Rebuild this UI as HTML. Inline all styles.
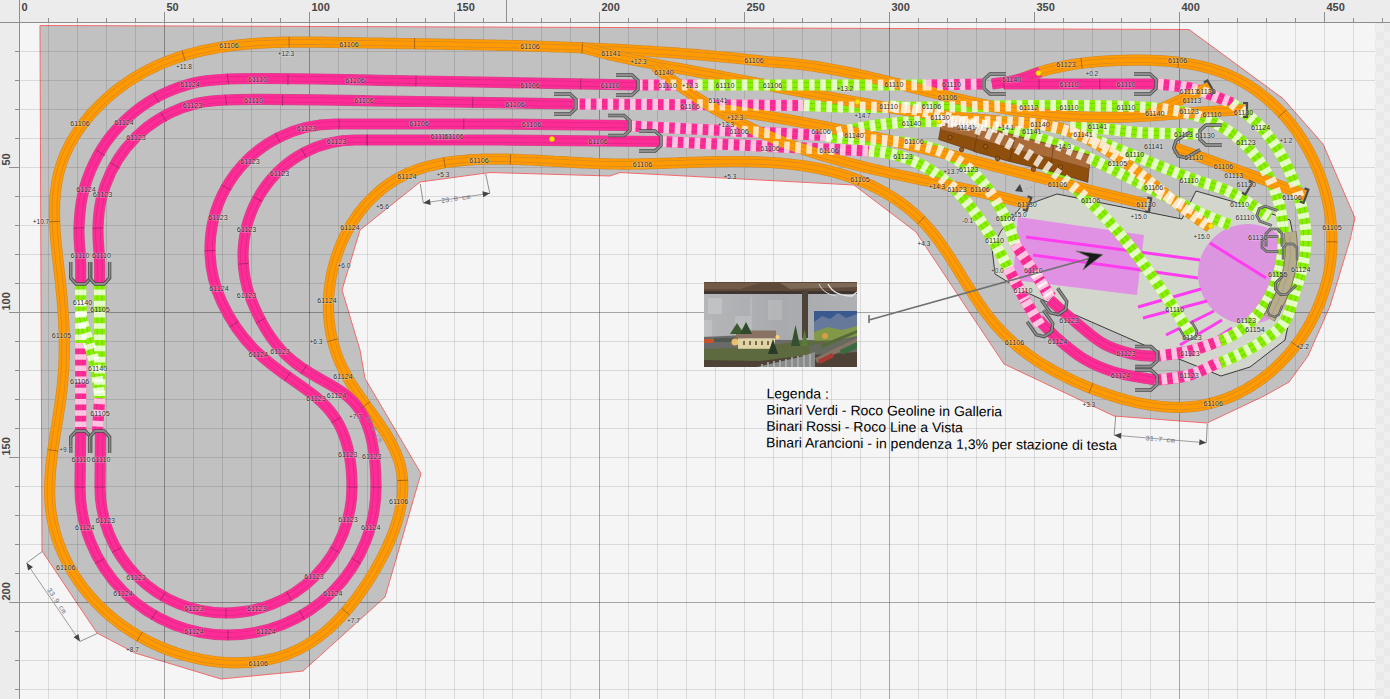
<!DOCTYPE html><html><head><meta charset="utf-8"><style>html,body{margin:0;padding:0;background:#f5f5f5;overflow:hidden}svg{display:block;font-family:"Liberation Sans",sans-serif}</style></head><body>
<svg width="1390" height="699" viewBox="0 0 1390 699">
<defs>
<pattern id="chk" width="16" height="16" patternUnits="userSpaceOnUse" x="0" y="0"><rect width="16" height="16" fill="#efefef"/><rect width="8" height="8" fill="#e9e9e9"/><rect x="8" y="8" width="8" height="8" fill="#e9e9e9"/></pattern>
</defs>
<rect width="1390" height="699" fill="#f5f5f5"/>
<rect x="1375" y="23" width="15" height="676" fill="url(#chk)"/>
<path d="M40 25.5 L1189 29.5 L1283 98.6 L1323 144 L1355 218 L1350 240 L1330 306 L1308 356 L1289 382 L1264 396 L1207 423 L1114 416 L1004 364 L952 286 L916 232 L854 185 L620 172.5 L610 176 L490 172.5 L420 182 L360 230 L342 290 L360 350 L365 378.5 L421 473.5 L385 597 L303 671 L221 679 L135 653 L97 633 L42 551 Z" fill="#c1c1c1" stroke="#f26b6b" stroke-width="1"/>
<line x1="19.5" y1="23" x2="19.5" y2="699" stroke="rgba(0,0,0,0.32)"/><line x1="48.5" y1="23" x2="48.5" y2="699" stroke="rgba(0,0,0,0.11)"/><line x1="77.5" y1="23" x2="77.5" y2="699" stroke="rgba(0,0,0,0.11)"/><line x1="106.5" y1="23" x2="106.5" y2="699" stroke="rgba(0,0,0,0.11)"/><line x1="135.5" y1="23" x2="135.5" y2="699" stroke="rgba(0,0,0,0.11)"/><line x1="164.5" y1="23" x2="164.5" y2="699" stroke="rgba(0,0,0,0.32)"/><line x1="193.5" y1="23" x2="193.5" y2="699" stroke="rgba(0,0,0,0.11)"/><line x1="222.5" y1="23" x2="222.5" y2="699" stroke="rgba(0,0,0,0.11)"/><line x1="251.5" y1="23" x2="251.5" y2="699" stroke="rgba(0,0,0,0.11)"/><line x1="280.5" y1="23" x2="280.5" y2="699" stroke="rgba(0,0,0,0.11)"/><line x1="309.5" y1="23" x2="309.5" y2="699" stroke="rgba(0,0,0,0.32)"/><line x1="338.5" y1="23" x2="338.5" y2="699" stroke="rgba(0,0,0,0.11)"/><line x1="367.5" y1="23" x2="367.5" y2="699" stroke="rgba(0,0,0,0.11)"/><line x1="396.5" y1="23" x2="396.5" y2="699" stroke="rgba(0,0,0,0.11)"/><line x1="425.5" y1="23" x2="425.5" y2="699" stroke="rgba(0,0,0,0.11)"/><line x1="454.5" y1="23" x2="454.5" y2="699" stroke="rgba(0,0,0,0.11)"/><line x1="483.5" y1="23" x2="483.5" y2="699" stroke="rgba(0,0,0,0.11)"/><line x1="512.5" y1="23" x2="512.5" y2="699" stroke="rgba(0,0,0,0.11)"/><line x1="541.5" y1="23" x2="541.5" y2="699" stroke="rgba(0,0,0,0.11)"/><line x1="570.5" y1="23" x2="570.5" y2="699" stroke="rgba(0,0,0,0.11)"/><line x1="599.5" y1="23" x2="599.5" y2="699" stroke="rgba(0,0,0,0.32)"/><line x1="628.5" y1="23" x2="628.5" y2="699" stroke="rgba(0,0,0,0.11)"/><line x1="657.5" y1="23" x2="657.5" y2="699" stroke="rgba(0,0,0,0.11)"/><line x1="686.5" y1="23" x2="686.5" y2="699" stroke="rgba(0,0,0,0.11)"/><line x1="715.5" y1="23" x2="715.5" y2="699" stroke="rgba(0,0,0,0.11)"/><line x1="744.5" y1="23" x2="744.5" y2="699" stroke="rgba(0,0,0,0.11)"/><line x1="773.5" y1="23" x2="773.5" y2="699" stroke="rgba(0,0,0,0.11)"/><line x1="802.5" y1="23" x2="802.5" y2="699" stroke="rgba(0,0,0,0.11)"/><line x1="831.5" y1="23" x2="831.5" y2="699" stroke="rgba(0,0,0,0.11)"/><line x1="860.5" y1="23" x2="860.5" y2="699" stroke="rgba(0,0,0,0.11)"/><line x1="889.5" y1="23" x2="889.5" y2="699" stroke="rgba(0,0,0,0.32)"/><line x1="918.5" y1="23" x2="918.5" y2="699" stroke="rgba(0,0,0,0.11)"/><line x1="947.5" y1="23" x2="947.5" y2="699" stroke="rgba(0,0,0,0.11)"/><line x1="976.5" y1="23" x2="976.5" y2="699" stroke="rgba(0,0,0,0.11)"/><line x1="1005.5" y1="23" x2="1005.5" y2="699" stroke="rgba(0,0,0,0.11)"/><line x1="1034.5" y1="23" x2="1034.5" y2="699" stroke="rgba(0,0,0,0.11)"/><line x1="1063.5" y1="23" x2="1063.5" y2="699" stroke="rgba(0,0,0,0.11)"/><line x1="1092.5" y1="23" x2="1092.5" y2="699" stroke="rgba(0,0,0,0.11)"/><line x1="1121.5" y1="23" x2="1121.5" y2="699" stroke="rgba(0,0,0,0.11)"/><line x1="1150.5" y1="23" x2="1150.5" y2="699" stroke="rgba(0,0,0,0.11)"/><line x1="1179.5" y1="23" x2="1179.5" y2="699" stroke="rgba(0,0,0,0.32)"/><line x1="1208.5" y1="23" x2="1208.5" y2="699" stroke="rgba(0,0,0,0.11)"/><line x1="1237.5" y1="23" x2="1237.5" y2="699" stroke="rgba(0,0,0,0.11)"/><line x1="1266.5" y1="23" x2="1266.5" y2="699" stroke="rgba(0,0,0,0.11)"/><line x1="1295.5" y1="23" x2="1295.5" y2="699" stroke="rgba(0,0,0,0.11)"/><line x1="1324.5" y1="23" x2="1324.5" y2="699" stroke="rgba(0,0,0,0.11)"/><line x1="1353.5" y1="23" x2="1353.5" y2="699" stroke="rgba(0,0,0,0.11)"/><line x1="19" y1="51.5" x2="1375" y2="51.5" stroke="rgba(0,0,0,0.11)"/><line x1="19" y1="80.5" x2="1375" y2="80.5" stroke="rgba(0,0,0,0.11)"/><line x1="19" y1="109.5" x2="1375" y2="109.5" stroke="rgba(0,0,0,0.11)"/><line x1="19" y1="138.5" x2="1375" y2="138.5" stroke="rgba(0,0,0,0.11)"/><line x1="19" y1="167.5" x2="1375" y2="167.5" stroke="rgba(0,0,0,0.11)"/><line x1="19" y1="196.5" x2="1375" y2="196.5" stroke="rgba(0,0,0,0.11)"/><line x1="19" y1="225.5" x2="1375" y2="225.5" stroke="rgba(0,0,0,0.11)"/><line x1="19" y1="254.5" x2="1375" y2="254.5" stroke="rgba(0,0,0,0.11)"/><line x1="19" y1="283.5" x2="1375" y2="283.5" stroke="rgba(0,0,0,0.11)"/><line x1="19" y1="312.5" x2="1375" y2="312.5" stroke="rgba(0,0,0,0.32)"/><line x1="19" y1="341.5" x2="1375" y2="341.5" stroke="rgba(0,0,0,0.11)"/><line x1="19" y1="370.5" x2="1375" y2="370.5" stroke="rgba(0,0,0,0.11)"/><line x1="19" y1="399.5" x2="1375" y2="399.5" stroke="rgba(0,0,0,0.11)"/><line x1="19" y1="428.5" x2="1375" y2="428.5" stroke="rgba(0,0,0,0.11)"/><line x1="19" y1="457.5" x2="1375" y2="457.5" stroke="rgba(0,0,0,0.11)"/><line x1="19" y1="486.5" x2="1375" y2="486.5" stroke="rgba(0,0,0,0.11)"/><line x1="19" y1="515.5" x2="1375" y2="515.5" stroke="rgba(0,0,0,0.11)"/><line x1="19" y1="544.5" x2="1375" y2="544.5" stroke="rgba(0,0,0,0.11)"/><line x1="19" y1="573.5" x2="1375" y2="573.5" stroke="rgba(0,0,0,0.11)"/><line x1="19" y1="602.5" x2="1375" y2="602.5" stroke="rgba(0,0,0,0.32)"/><line x1="19" y1="631.5" x2="1375" y2="631.5" stroke="rgba(0,0,0,0.11)"/><line x1="19" y1="660.5" x2="1375" y2="660.5" stroke="rgba(0,0,0,0.11)"/><line x1="19" y1="689.5" x2="1375" y2="689.5" stroke="rgba(0,0,0,0.11)"/><line x1="19" y1="718.5" x2="1375" y2="718.5" stroke="rgba(0,0,0,0.11)"/>
<path d="M992 248 L1001 231 L1021 207 L1057 194 L1182 219 L1196 191 L1245 205 L1290 220 L1300 270 L1285 340 L1250 367 L1221 376 L1184 361 L1160 352 L1071 313 L1030 294 L1008 282 L995 274 Z" fill="#d2d6cd" stroke="#3a3a3a" stroke-width="1"/><path d="M1018 217 L1144 235 L1137 295 L1013 280 Z" fill="#e28be6" opacity="0.92"/><circle cx="1248" cy="274" r="50" fill="#dc95df"/><line x1="1026" y1="237" x2="1200" y2="260" stroke="#ff3cf0" stroke-width="3"/><line x1="1033" y1="255" x2="1198" y2="278" stroke="#ff3cf0" stroke-width="3"/><line x1="1210" y1="243" x2="1266" y2="278" stroke="#ff3cf0" stroke-width="3"/><line x1="1138" y1="307" x2="1201" y2="289" stroke="#ff3cf0" stroke-width="3"/><line x1="1143" y1="318" x2="1207" y2="301" stroke="#ff3cf0" stroke-width="3"/><line x1="1166" y1="335" x2="1214" y2="311" stroke="#ff3cf0" stroke-width="3"/><line x1="1180" y1="345" x2="1222" y2="320" stroke="#ff3cf0" stroke-width="3"/><line x1="1195" y1="352" x2="1232" y2="328" stroke="#ff3cf0" stroke-width="3"/>
<defs><path id="t0" d="M1010 84 1013.6 82.2 1017.2 80.5 1020.9 78.9 1024.5 77.4 1028.2 76 1031.9 74.6 1035.6 73.3 1039.4 72.1 1043.1 71 1046.9 69.9 1050.7 68.9 1054.5 68 1058.3 67.2 1062.1 66.4 1066 65.6 1069.9 65 1073.8 64.3 1077.7 63.8 1081.6 63.3 1085.5 62.8 1089.5 62.4 1093.4 62 1097.4 61.7 1101.4 61.4 1105.4 61.1 1109.4 60.9 1113.4 60.7 1117.5 60.5 1121.5 60.4 1125.6 60.3 1129.7 60.2 1133.8 60.2 1137.8 60.2 1141.9 60.2 1146 60.2 1150.1 60.3 1154.2 60.5 1158.3 60.7 1162.4 60.9 1166.5 61.2 1170.5 61.5 1174.6 61.9 1178.6 62.4 1182.6 62.9 1186.6 63.5 1190.5 64.1 1194.5 64.8 1198.4 65.6 1202.3 66.5 1206.2 67.5 1210 68.5 1213.8 69.6 1217.5 70.8 1221.2 72.1 1224.9 73.5 1228.5 75 1232.1 76.5 1235.6 78.2 1239.1 80 1242.5 81.9 1245.9 83.8 1249.3 85.9 1252.5 88 1255.8 90.2 1258.9 92.5 1262.1 94.9 1265.1 97.3 1268.1 99.9 1271.1 102.5 1274 105.2 1276.8 107.9 1279.6 110.7 1282.3 113.6 1285 116.6 1287.5 119.6 1290.1 122.7 1292.5 125.8 1294.9 129 1297.3 132.3 1299.5 135.6 1301.7 138.9 1303.8 142.3 1305.9 145.8 1307.9 149.3 1309.8 152.8 1311.6 156.4 1313.4 160 1315.1 163.7 1316.7 167.4 1318.2 171.1 1319.7 174.9 1321.1 178.7 1322.4 182.5 1323.6 186.3 1324.8 190.2 1325.8 194.1 1326.8 198 1327.7 201.9 1328.5 205.9 1329.3 209.8 1329.9 213.8 1330.5 217.8 1330.9 221.8 1331.3 225.8 1331.6 229.8 1331.8 233.8 1331.9 237.8 1331.9 241.8 1331.8 245.8 1331.7 249.8 1331.4 253.7 1331 257.7 1330.6 261.7 1330 265.6 1329.3 269.6 1328.6 273.5 1327.8 277.4 1326.8 281.3 1325.8 285.1 1324.7 288.9 1323.5 292.7 1322.2 296.5 1320.8 300.3 1319.4 304 1317.8 307.6 1316.2 311.3 1314.5 314.9 1312.7 318.4 1310.9 322 1308.9 325.4 1306.9 328.9 1304.8 332.3 1302.7 335.6 1300.4 338.9 1298.1 342.1 1295.8 345.3 1293.3 348.4 1290.8 351.5 1288.3 354.5 1285.6 357.4 1282.9 360.3 1280.2 363.1 1277.4 365.8 1274.5 368.5 1271.6 371.1 1268.6 373.6 1265.5 376.1 1262.4 378.4 1259.3 380.7 1256.1 382.9 1252.8 385.1 1249.5 387.1 1246.2 389.1 1242.8 390.9 1239.4 392.7 1235.9 394.4 1232.4 396 1228.8 397.5 1225.2 398.9 1221.5 400.2 1217.9 401.3 1214.1 402.4 1210.4 403.4 1206.6 404.3 1202.8 405 1198.9 405.7 1195.1 406.2 1191.2 406.7 1187.2 407 1183.3 407.2 1179.3 407.3 1175.3 407.3 1171.3 407.1 1167.2 406.9 1163.2 406.6 1159.1 406.2 1155.1 405.7 1151 405.2 1146.9 404.5 1142.9 403.8 1138.8 403 1134.7 402.1 1130.7 401.1 1126.6 400.1 1122.6 399 1118.6 397.8 1114.6 396.6 1110.6 395.3 1106.6 394 1102.7 392.6 1098.7 391.2 1094.8 389.7 1091 388.2 1087.1 386.7 1083.3 385.1 1079.6 383.4 1075.8 381.8 1072.1 380.1 1068.5 378.4 1064.9 376.6 1061.3 374.8 1057.8 373 1054.3 371.1 1050.8 369.2 1047.4 367.2 1044 365.2 1040.7 363.1 1037.4 361 1034.2 358.8 1031 356.6 1027.8 354.4 1024.7 352 1021.7 349.7 1018.6 347.3 1015.7 344.8 1012.7 342.2 1009.9 339.6 1007 337 1004.3 334.3 1001.5 331.5 998.9 328.6 996.2 325.7 993.7 322.8 991.1 319.7 988.7 316.6 986.2 313.4 983.9 310.2 981.5 306.9 979.2 303.6 976.9 300.2 974.7 296.8 972.5 293.3 970.3 289.9 968.1 286.4 965.9 282.9 963.7 279.3 961.5 275.8 959.4 272.3 957.2 268.8 955 265.3 952.8 261.8 950.6 258.3 948.4 254.8 946.1 251.4 943.8 248.1 941.5 244.7 939.1 241.4 936.7 238.2 934.3 235 931.8 231.9 929.2 228.9 926.6 225.9 924 223 921.2 220.2 918.4 217.4 915.6 214.8 912.7 212.2 909.7 209.7 906.7 207.2 903.6 204.9 900.5 202.6 897.3 200.4 894.1 198.2 890.9 196.2 887.6 194.2 884.2 192.2 880.8 190.4 877.4 188.6 874 186.8 870.5 185.2 866.9 183.6 863.3 182 859.7 180.6 856.1 179.2 852.5 177.8 848.8 176.6 845.1 175.4 841.3 174.2 837.6 173.1 833.8 172.1 830 171.1 826.2 170.2 822.3 169.3 818.5 168.5 814.6 167.7 810.7 167 806.8 166.4 802.9 165.8 799 165.2 795.1 164.7 791.1 164.3 787.2 163.8 783.2 163.5 779.2 163.1 775.2 162.8 771.2 162.5 767.2 162.3 763.2 162.1 759.1 161.9 755.1 161.8 751 161.7 747 161.6 742.9 161.6 738.9 161.5 734.8 161.5 730.7 161.5 726.6 161.6 722.6 161.6 718.5 161.7 714.4 161.7 710.3 161.8 706.2 161.9 702.1 162.1 698 162.2 694 162.3 689.9 162.4 685.8 162.6 681.7 162.7 677.6 162.9 673.5 163 669.5 163.1 665.4 163.3 661.3 163.4 657.3 163.5 653.2 163.6 649.2 163.7 645.1 163.8 641.1 163.9 637.1 164 633.1 164 629.1 164.1 625.1 164.1 621.1 164.1 617.1 164 613.2 164 609.2 163.9 605.3 163.8 601.3 163.7 597.4 163.5 593.5 163.4 589.6 163.2 585.7 163 581.8 162.8 577.9 162.6 574 162.4 570 162.2 566.1 161.9 562.2 161.7 558.3 161.5 554.4 161.3 550.4 161 546.5 160.8 542.5 160.6 538.6 160.4 534.6 160.2 530.6 160 526.6 159.8 522.6 159.7 518.5 159.5 514.5 159.4 510.4 159.3 506.3 159.2 502.2 159.1 498 159.1 493.9 159.1 489.7 159.1 485.6 159.2 481.4 159.3 477.3 159.5 473.1 159.7 469 159.9 464.9 160.3 460.7 160.6 456.6 161.1 452.6 161.6 448.5 162.1 444.5 162.8 440.5 163.5 436.6 164.3 432.6 165.2 428.8 166.2 424.9 167.2 421.1 168.4 417.4 169.6 413.7 170.9 410.1 172.4 406.6 173.9 403.1 175.6 399.6 177.4 396.3 179.2 393 181.2 389.8 183.3 386.6 185.5 383.6 187.8 380.5 190.2 377.6 192.7 374.8 195.3 372 197.9 369.3 200.7 366.7 203.5 364.1 206.4 361.7 209.4 359.3 212.4 357 215.6 354.8 218.8 352.6 222 350.6 225.4 348.6 228.8 346.7 232.2 344.9 235.7 343.2 239.2 341.6 242.8 340.1 246.5 338.6 250.2 337.3 253.9 336 257.7 334.9 261.5 333.8 265.3 332.8 269.1 331.9 273 331.1 276.9 330.5 280.9 329.9 284.8 329.4 288.8 329 292.7 328.7 296.7 328.5 300.7 328.4 304.7 328.5 308.7 328.6 312.7 328.8 316.7 329.2 320.6 329.6 324.6 330.2 328.6 330.8 332.5 331.6 336.4 332.5 340.3 333.5 344.2 334.6 348 335.8 351.8 337.1 355.6 338.6 359.4 340.2 363.1 341.9 366.7 343.7 370.4 345.6 374 347.6 377.5 349.6 381 351.8 384.5 354 387.9 356.3 391.4 358.7 394.8 361 398.1 363.4 401.5 365.8 404.9 368.2 408.2 370.6 411.5 373 414.8 375.4 418.2 377.7 421.5 380 424.8 382.2 428.1 384.4 431.4 386.5 434.8 388.5 438.1 390.4 441.5 392.2 444.9 393.9 448.3 395.5 451.8 396.9 455.2 398.2 458.7 399.4 462.2 400.3 465.8 401.1 469.4 401.8 473 402.2 476.7 402.6 480.4 402.7 484.1 402.7 487.9 402.6 491.7 402.3 495.5 401.9 499.3 401.3 503.1 400.7 506.9 399.9 510.8 398.9 514.6 397.9 518.5 396.8 522.3 395.5 526.2 394.2 530.1 392.8 533.9 391.2 537.7 389.6 541.6 387.9 545.4 386.2 549.2 384.3 553 382.4 556.7 380.5 560.4 378.4 564.1 376.4 567.8 374.2 571.5 372.1 575.1 369.9 578.6 367.6 582.2 365.3 585.6 363 589.1 360.6 592.5 358.2 595.8 355.8 599.1 353.3 602.3 350.8 605.5 348.2 608.6 345.6 611.7 342.9 614.7 340.2 617.6 337.5 620.4 334.7 623.2 331.9 625.9 329 628.5 326.1 631.1 323.1 633.5 320 635.9 317 638.2 313.8 640.4 310.6 642.5 307.4 644.5 304.1 646.4 300.8 648.2 297.4 649.9 293.9 651.5 290.4 653 286.8 654.4 283.2 655.6 279.5 656.8 275.8 657.8 272 658.8 268.2 659.6 264.4 660.4 260.5 661 256.6 661.6 252.7 662 248.7 662.3 244.7 662.6 240.7 662.7 236.7 662.8 232.7 662.8 228.6 662.6 224.6 662.4 220.5 662.1 216.4 661.7 212.4 661.2 208.3 660.6 204.3 659.9 200.3 659.2 196.3 658.3 192.3 657.4 188.3 656.4 184.3 655.3 180.4 654.2 176.5 653 172.6 651.6 168.8 650.3 165 648.8 161.3 647.3 157.6 645.6 153.9 644 150.3 642.2 146.7 640.4 143.1 638.5 139.6 636.6 136.2 634.5 132.7 632.4 129.4 630.3 126.1 628.1 122.8 625.8 119.6 623.5 116.5 621.1 113.4 618.6 110.3 616.1 107.3 613.5 104.4 610.9 101.6 608.2 98.8 605.4 96 602.6 93.4 599.8 90.7 596.9 88.2 593.9 85.7 590.9 83.3 587.9 81 584.8 78.8 581.7 76.6 578.5 74.5 575.2 72.4 572 70.5 568.6 68.6 565.3 66.8 561.9 65.1 558.4 63.5 555 61.9 551.4 60.5 547.9 59.1 544.3 57.8 540.7 56.6 537 55.5 533.3 54.5 529.6 53.6 525.9 52.7 522.1 52 518.3 51.4 514.4 50.8 510.6 50.4 506.7 50.1 502.8 49.8 498.8 49.7 494.9 49.6 490.9 49.7 486.9 49.8 482.9 50 478.9 50.2 474.8 50.5 470.8 50.9 466.7 51.3 462.6 51.8 458.5 52.3 454.4 52.9 450.3 53.5 446.2 54.1 442.1 54.7 438 55.3 433.8 56 429.7 56.7 425.6 57.3 421.5 58 417.4 58.6 413.2 59.3 409.1 59.9 405.1 60.4 401 61 396.9 61.5 392.8 62 388.8 62.4 384.8 62.8 380.7 63.1 376.7 63.4 372.7 63.7 368.8 63.9 364.8 64 360.8 64.2 356.9 64.2 352.9 64.3 349 64.3 345 64.3 341.1 64.2 337.2 64.1 333.3 64 329.3 63.8 325.4 63.7 321.5 63.4 317.5 63.2 313.6 62.9 309.7 62.6 305.7 62.3 301.8 62 297.8 61.6 293.9 61.2 289.9 60.8 285.9 60.4 281.9 59.9 277.9 59.5 273.9 59 269.9 58.6 265.9 58.1 261.8 57.6 257.8 57.2 253.8 56.8 249.7 56.3 245.7 56 241.6 55.6 237.6 55.3 233.6 55 229.5 54.8 225.5 54.7 221.5 54.5 217.5 54.5 213.5 54.5 209.5 54.6 205.6 54.7 201.6 55 197.7 55.3 193.8 55.7 189.9 56.3 186 56.9 182.1 57.6 178.3 58.4 174.5 59.4 170.7 60.5 167 61.7 163.2 63 159.5 64.4 155.9 66 152.3 67.7 148.7 69.5 145.1 71.4 141.6 73.4 138.2 75.5 134.7 77.7 131.4 80 128 82.4 124.7 84.9 121.5 87.5 118.3 90.1 115.2 92.8 112.1 95.6 109.1 98.5 106.2 101.4 103.3 104.4 100.5 107.5 97.7 110.6 95 113.7 92.4 116.9 89.8 120.2 87.4 123.5 85 126.8 82.6 130.1 80.4 133.5 78.2 137 76.1 140.4 74.1 143.9 72.2 147.4 70.3 150.9 68.6 154.4 66.9 158 65.2 161.6 63.7 165.2 62.2 168.8 60.8 172.4 59.4 176.1 58.1 179.8 56.9 183.5 55.7 187.2 54.6 191 53.6 194.8 52.6 198.5 51.6 202.3 50.8 206.2 49.9 210 49.2 213.8 48.4 217.7 47.8 221.6 47.1 225.5 46.6 229.4 46 233.3 45.5 237.2 45.1 241.1 44.6 245.1 44.3 249.1 43.9 253 43.6 257 43.3 261 43.1 265 42.9 269 42.7 273 42.5 277 42.4 281.1 42.3 285.1 42.2 289.1 42.2 293.2 42.1 297.2 42.1 301.3 42.1 305.3 42.1 309.4 42.1 313.5 42.1 317.5 42.2 321.6 42.2 325.6 42.3 329.7 42.3 333.8 42.4 337.8 42.5 341.9 42.6 345.9 42.6 350 42.7 354.1 42.8 358.1 42.8 362.1 42.9 366.2 43 370.2 43.1 374.3 43.1 378.3 43.2 382.4 43.2 386.4 43.3 390.4 43.4 394.4 43.4 398.5 43.5 402.5 43.6 406.5 43.6 410.5 43.7 414.6 43.7 418.6 43.8 422.6 43.9 426.6 43.9 430.6 44 434.6 44.1 438.6 44.1 442.7 44.2 446.7 44.3 450.7 44.3 454.7 44.4 458.7 44.5 462.7 44.5 466.7 44.6 470.7 44.7 474.7 44.8 478.7 44.8 482.7 44.9 486.6 45 490.6 45.1 494.6 45.2 498.6 45.3 502.6 45.3 506.6 45.4 510.6 45.5 514.6 45.6 518.6 45.7 522.5 45.8 526.5 45.9 530.5 46.1 534.5 46.2 538.5 46.3 542.5 46.4 546.4 46.5 550.4 46.6 554.4 46.8 558.4 46.9 562.4 47 566.3 47.2 570.3 47.3 574.3 47.5 578.3 47.6 582.3 47.8 586.2 48 590.2 48.1 594.2 48.3 598.2 48.5 602.2 48.7 606.1 48.8 610.1 49 614.1 49.2 618.1 49.4 622.1 49.6 626 49.8 630 50.1 634 50.3 638 50.5 642 50.8 646 51 649.9 51.2 653.9 51.5 657.9 51.8 661.9 52 665.9 52.3 669.9 52.6 673.9 52.9 677.9 53.2 681.8 53.5 685.8 53.8 689.8 54.1 693.8 54.4 697.8 54.7 701.8 55.1 705.8 55.4 709.8 55.8 713.8 56.1 717.8 56.5 721.8 56.9 725.8 57.2 729.8 57.6 733.9 58 737.9 58.4 741.9 58.8 745.9 59.3 749.9 59.7 753.9 60.1 757.9 60.6 762 61 766 61.5 770 62"/><path id="t1" d="M992 84 C998.7 83 1005.7 82.3 1012 81 C1017.7 79.8 1023.1 78.1 1028 76.5 C1032.3 75.1 1036 73.5 1040 72"/><path id="t2" d="M770 62 774.1 62.2 778.1 62.4 782.1 62.7 786.2 63 790.2 63.4 794.2 63.8 798.3 64.2 802.3 64.7 806.3 65.2 810.3 65.8 814.3 66.3 818.3 66.9 822.3 67.6 826.3 68.2 830.3 68.9 834.3 69.7 838.3 70.4 842.3 71.2 846.2 72 850.2 72.8 854.2 73.6 858.2 74.5 862.1 75.4 866.1 76.3 870.1 77.2 874 78.1 878 79 881.9 80 885.9 80.9 889.8 81.9 893.8 82.9 897.7 83.8 901.7 84.8 905.6 85.8 909.6 86.8 913.5 87.8 917.5 88.8 921.4 89.8 925.4 90.8 929.3 91.8 933.3 92.8 937.2 93.8 941.2 94.8 945.1 95.8 949.1 96.7 953 97.7 957 98.6 960.9 99.5 964.9 100.5 968.8 101.4 972.8 102.2 976.7 103.1 980.7 104 984.6 104.8 988.6 105.6 992.5 106.4 996.5 107.2 1000.5 107.9 1004.4 108.6 1008.4 109.3 1012.4 109.9 1016.3 110.6 1020.3 111.2 1024.3 111.7 1028.3 112.3 1032.3 112.8 1036.3 113.3 1040.3 113.7 1044.2 114.2 1048.2 114.6 1052.2 114.9 1056.2 115.3 1060.2 115.6 1064.2 115.9 1068.2 116.2 1072.3 116.4 1076.3 116.6 1080.3 116.8 1084.3 116.9 1088.3 117.1 1092.3 117.2 1096.4 117.3 1100.4 117.3 1104.4 117.3 1108.4 117.3 1112.5 117.3 1116.5 117.3 1120.5 117.2 1124.6 117.1 1128.6 116.9 1132.6 116.8 1136.7 116.6 1140.7 116.4 1144.8 116.2 1148.8 116 1152.8 115.7 1156.9 115.4 1160.9 115.1 1165 114.8 1169 114.5 1173.1 114.2 1177.1 113.9 1181.2 113.6 1185.2 113.3 1189.3 113 1193.3 112.7 1197.4 112.4 1201.4 112.1 1205.5 111.8 1209.6 111.5 1213.6 111.3 1217.7 111 1221.7 110.8 1225.8 110.6 1229.8 110.4 1233.9 110.3 1237.9 110.1 1242 110.1 1246 110"/><path id="t3" d="M582 47.5 585.9 48.6 589.8 49.7 593.7 50.7 597.7 51.8 601.6 52.7 605.5 53.7 609.5 54.7 613.4 55.6 617.3 56.5 621.3 57.3 625.2 58.2 629.2 59 633.1 59.9 637.1 60.7 641.1 61.4 645 62.2 649 63 653 63.7 656.9 64.5 660.9 65.2 664.9 66 668.8 66.7 672.8 67.4 676.8 68.1 680.7 68.8 684.7 69.5 688.7 70.3 692.7 71 696.6 71.7 700.6 72.4 704.6 73.2 708.5 73.9 712.5 74.6 716.5 75.4 720.4 76.1 724.4 76.9 728.4 77.7 732.3 78.4 736.3 79.2 740.3 79.9 744.2 80.7 748.2 81.5 752.1 82.2 756.1 83 760.1 83.8 764 84.6 768 85.3 772 86.1 775.9 86.9 779.9 87.7 783.9 88.4 787.8 89.2 791.8 90 795.8 90.7 799.7 91.5 803.7 92.3 807.7 93 811.6 93.8 815.6 94.6 819.6 95.3 823.6 96.1 827.5 96.8 831.5 97.6 835.5 98.3 839.5 99 843.5 99.8 847.4 100.5 851.4 101.2 855.4 101.9 859.4 102.6 863.4 103.3 867.4 104 871.4 104.7 875.4 105.4 879.3 106.1 883.3 106.7 887.3 107.4 891.3 108 895.3 108.7 899.3 109.3 903.3 109.9 907.3 110.5 911.4 111.1 915.4 111.7 919.4 112.3 923.4 112.8 927.4 113.4 931.4 113.9 935.4 114.4 939.5 115 943.5 115.5 947.5 116 951.5 116.4 955.5 116.9 959.6 117.3 963.6 117.8 967.6 118.2 971.7 118.6 975.7 119 979.8 119.4 983.8 119.7 987.9 120.1 991.9 120.4 995.9 120.7 1000 121"/><path id="t4" d="M655 66 658.2 68.7 661.4 71.3 664.6 73.9 667.8 76.5 671 79.1 674.3 81.6 677.6 84 680.9 86.5 684.2 88.9 687.5 91.2 690.9 93.6 694.2 95.9 697.6 98.1 701 100.3 704.4 102.5 707.9 104.7 711.3 106.8 714.8 108.9 718.3 111 721.8 113 725.3 115 728.8 116.9 732.4 118.8 735.9 120.7 739.5 122.6 743.1 124.4 746.7 126.1 750.4 127.9 754 129.6 757.7 131.3 761.3 132.9 765 134.6 768.7 136.1 772.4 137.7 776.1 139.2 779.9 140.7 783.6 142.2 787.4 143.6 791.2 145 795 146.4 798.8 147.8 802.6 149.1 806.4 150.4 810.2 151.7 814.1 152.9 817.9 154.2 821.8 155.4 825.7 156.5 829.6 157.7 833.5 158.8 837.4 159.9 841.3 161 845.2 162.1 849.1 163.2 853.1 164.2 857 165.2 860.9 166.2 864.9 167.2 868.9 168.1 872.8 169.1 876.8 170 880.8 170.9 884.8 171.9 888.7 172.8 892.7 173.7 896.7 174.5 900.7 175.4 904.7 176.3 908.7 177.1 912.7 178 916.7 178.8 920.7 179.7 924.7 180.5 928.7 181.3 932.8 182.2 936.8 183 940.8 183.8 944.8 184.7 948.8 185.5 952.8 186.4 956.8 187.2 960.8 188 964.8 188.9 968.8 189.8 972.7 190.6 976.7 191.5 980.7 192.4 984.7 193.3 988.7 194.2 992.6 195.1 996.6 196 1000.5 197 1004.5 197.9 1008.4 198.9 1012.4 199.9 1016.3 200.9 1020.2 201.9 1024.1 202.9 1028 204"/><path id="t5" d="M723 109.8 727 110.3 731.1 110.9 735.1 111.4 739.1 112 743.1 112.5 747.1 113.1 751.1 113.7 755.1 114.3 759.2 115 763.2 115.6 767.2 116.2 771.2 116.9 775.2 117.5 779.2 118.2 783.1 118.9 787.1 119.6 791.1 120.3 795.1 121 799.1 121.7 803.1 122.5 807.1 123.2 811 124 815 124.7 819 125.5 823 126.3 826.9 127.1 830.9 127.9 834.9 128.7 838.9 129.5 842.8 130.3 846.8 131.1 850.7 132 854.7 132.8 858.7 133.7 862.6 134.5 866.6 135.4 870.5 136.3 874.5 137.1 878.4 138 882.4 138.9 886.3 139.8 890.3 140.7 894.2 141.6 898.2 142.5 902.1 143.5 906.1 144.4 910 145.3 914 146.2 917.9 147.2 921.8 148.1 925.8 149.1 929.7 150 933.7 151 937.6 151.9 941.5 152.9 945.5 153.9 949.4 154.9 953.3 155.8 957.3 156.8 961.2 157.8 965.1 158.8 969.1 159.8 973 160.7 976.9 161.7 980.9 162.7 984.8 163.7 988.7 164.7 992.7 165.7 996.6 166.7 1000.5 167.7 1004.4 168.7 1008.4 169.7 1012.3 170.7 1016.2 171.7 1020.1 172.7 1024.1 173.7 1028 174.7 1031.9 175.7 1035.9 176.7 1039.8 177.7 1043.7 178.7 1047.6 179.7 1051.6 180.7 1055.5 181.7 1059.4 182.7 1063.4 183.7 1067.3 184.7 1071.2 185.7 1075.1 186.7 1079.1 187.7 1083 188.7 1086.9 189.7 1090.9 190.6 1094.8 191.6 1098.7 192.6 1102.7 193.6 1106.6 194.5 1110.5 195.5 1114.5 196.5 1118.4 197.4 1122.4 198.4 1126.3 199.3 1130.2 200.3 1134.2 201.2 1138.1 202.1 1142.1 203.1 1146 204"/><path id="t6" d="M1150 114 C1160 109.3 1170 104.5 1180 100 C1190 95.5 1200 91.3 1210 87"/><path id="t7" d="M1175 148 C1190 153.3 1204.6 158.5 1220 164 C1236.2 169.8 1254.8 176.5 1270 182 C1282.7 186.7 1293.3 190.7 1305 195"/><path id="t8" d="M940 120 944 120.4 948 120.7 952 121 956 121.2 960.1 121.4 964.2 121.5 968.3 121.6 972.4 121.7 976.5 121.7 980.7 121.7 984.8 121.8 988.9 121.8 993.1 121.8 997.2 121.8 1001.4 121.9 1005.5 122 1009.6 122.1 1013.7 122.3 1017.8 122.5 1021.9 122.7 1026 123 1030.1 123.4 1034.1 123.8 1038.1 124.3 1042.1 124.9 1046.1 125.6 1050 126.3 1053.9 127.2 1057.8 128.1 1061.6 129.1 1065.4 130.3 1069.2 131.5 1073 132.8 1076.7 134.2 1080.3 135.7 1084 137.3 1087.6 139 1091.1 140.7 1094.7 142.6 1098.2 144.6 1101.7 146.6 1105.1 148.7 1108.5 150.8 1111.9 153 1115.3 155.3 1118.6 157.7 1122 160 1125.3 162.5 1128.6 164.9 1131.8 167.4 1135.1 169.9 1138.4 172.5 1141.6 175.1 1144.8 177.7 1148.1 180.2 1151.3 182.8 1154.5 185.4 1157.7 188 1160.9 190.6 1164.1 193.2 1167.4 195.8 1170.6 198.3 1173.8 200.9 1177 203.4 1180.3 205.9 1183.5 208.4 1186.8 210.8 1190.1 213.2 1193.3 215.6 1196.6 218 1200 220.3 1203.3 222.6 1206.6 224.8 1210 227"/><path id="t9" d="M990 122 994.2 122.1 998.3 122.1 1002.5 122.2 1006.7 122.2 1010.9 122.3 1015 122.4 1019.2 122.5 1023.4 122.7 1027.5 122.9 1031.6 123.2 1035.7 123.6 1039.8 124.1 1043.9 124.7 1047.9 125.3 1051.9 126.1 1055.8 127 1059.7 128.1 1063.6 129.2 1067.4 130.5 1071.2 131.9 1074.9 133.3 1078.7 134.9 1082.3 136.5 1086 138.3 1089.6 140.1 1093.2 142 1096.8 144 1100.3 146 1103.8 148.1 1107.3 150.3 1110.7 152.5 1114.1 154.8 1117.5 157.1 1120.9 159.5 1124.3 161.9 1127.6 164.3 1130.9 166.8 1134.2 169.3 1137.5 171.9 1140.8 174.4 1144.1 177 1147.3 179.6 1150.6 182.2 1153.8 184.8 1157.1 187.5 1160.3 190.1 1163.6 192.7 1166.8 195.3 1170.1 197.9 1173.3 200.5 1176.6 203.1 1179.9 205.6 1183.1 208.1 1186.4 210.6 1189.8 213.1 1193.1 215.5 1196.4 217.9 1199.8 220.3 1203.2 222.6 1206.6 224.8 1210 227"/><path id="t10" d="M1070 127 C1081.7 127.7 1093.3 128.1 1105 129 C1116.7 129.9 1126.8 131.7 1140 132.5 C1157.3 133.6 1180 133.5 1200 134"/><path id="t11" d="M637 85 C564.7 83.7 490.1 82 420 81 C354 80 265.5 77.1 228 79 C212.4 79.8 205.6 80.3 194.8 82.7 C184.1 85.2 173.3 89 163.4 93.8 C153.4 98.6 143.7 104.6 135.1 111.5 C126.5 118.4 118.4 126.5 111.5 135.1 C104.6 143.7 98.6 153.4 93.8 163.4 C89 173.3 85.2 184.1 82.7 194.8 C80.3 205.6 79.4 216.8 79 228 C78.6 239.5 80.5 252.8 80.7 263 C80.9 270.9 80.7 277 80.7 284"/><path id="t12" d="M574 104 C522.7 103.2 474.3 102.2 420 101.5 C359.1 100.8 261.8 98.1 226 100 C212.2 100.7 206.8 101.1 197.5 103.2 C188.3 105.3 179 108.6 170.5 112.7 C161.9 116.8 153.6 122 146.2 127.9 C138.8 133.8 131.8 140.8 125.9 148.2 C120 155.6 114.8 163.9 110.7 172.5 C106.6 181 103.3 190.3 101.2 199.5 C99.1 208.8 98.3 218 98 228 C97.6 239.1 99.4 252.8 99.6 263 C99.8 270.9 99.6 277 99.6 284"/><path id="t13" d="M628 125.5 L500 124 L335 124 A125 125 0 0 0 221.7 301.8 C268.2 401.6 352 370.3 352 487 A126 126 0 0 1 226 613 A126 126 0 0 1 100 487 L100.5 431"/><path id="t14" d="M660 141.5 L500 140 L355 140 A112 116 0 0 0 251.2 299.5 C297 417 376 347.3 376 487 A148 148 0 0 1 228 635 A148 148 0 0 1 80 487 L80.7 431"/><path id="t15" d="M80.7 284 L80.7 343"/><path id="t16" d="M80.7 343 L80.7 431"/><path id="t17" d="M99.6 284 L99.6 398.6"/><path id="t18" d="M80.7 300 C81.1 306 80.7 310.7 82 318 C84.1 330.1 92 351 95 365 C97.4 376 98.1 385 99.6 395"/><path id="t19" d="M99.6 398.6 L97.5 431"/><path id="t20" d="M637 85 L697 85"/><path id="t21" d="M697 85 L868 85"/><path id="t22" d="M868 85 L926 85"/><path id="t23" d="M926 85 L984 84"/><path id="t24" d="M1004 84 C1015.7 84 1024.9 84 1039 84 C1060.4 84 1098.4 84 1120 84 C1134.4 84 1144 84 1156 84"/><path id="t25" d="M1158 84 C1168.7 85.3 1180.2 85.8 1190 88 C1198.7 90 1206.6 93.3 1214 96 C1220.5 98.3 1226 100.7 1232 103"/><path id="t26" d="M1232 103 C1241.3 110.7 1251.6 117.1 1260 126 C1268.7 135.3 1276.5 146.1 1283 158 C1290 170.9 1296.1 187.3 1300 201 C1303.3 212.8 1305.6 224 1306 235 C1306.4 245.3 1304.9 255.3 1303 265 C1301.2 274.3 1298 282.7 1295 292 C1291.7 302 1289.7 314.8 1284 323 C1278.9 330.3 1270.9 335.1 1264 340 C1257.5 344.7 1251.1 348.3 1244 352 C1236.5 356 1228 359.3 1220 363"/><path id="t27" d="M1220 362 C1210 366.3 1200.4 372 1190 375 C1179.7 378 1168.7 378.3 1158 380"/><path id="t28" d="M574 104 L804 105.5"/><path id="t29" d="M804 105.5 808 105.7 812.1 105.9 816.1 106 820.2 106.2 824.2 106.3 828.3 106.5 832.3 106.6 836.3 106.7 840.4 106.8 844.4 106.9 848.4 107 852.5 107.1 856.5 107.2 860.5 107.2 864.6 107.3 868.6 107.3 872.6 107.4 876.6 107.4 880.6 107.4 884.7 107.4 888.7 107.4 892.7 107.4 896.7 107.4 900.7 107.4 904.8 107.4 908.8 107.4 912.8 107.3 916.8 107.3 920.8 107.3 924.8 107.2 928.9 107.2 932.9 107.1 936.9 107.1 940.9 107 944.9 107 948.9 106.9 952.9 106.8 957 106.8 961 106.7 965 106.7 969 106.6 973 106.5 977 106.5 981.1 106.4 985.1 106.3 989.1 106.3 993.1 106.2 997.2 106.1 1001.2 106.1 1005.2 106 1009.2 105.9 1013.3 105.9 1017.3 105.8 1021.3 105.8 1025.3 105.7 1029.4 105.7 1033.4 105.6 1037.4 105.6 1041.5 105.6 1045.5 105.6 1049.6 105.5 1053.6 105.5 1057.7 105.5 1061.7 105.5 1065.8 105.5 1069.8 105.5 1073.9 105.5 1077.9 105.5 1082 105.6 1086 105.6 1090.1 105.7 1094.2 105.7 1098.2 105.8 1102.3 105.8 1106.4 105.9 1110.5 106 1114.5 106.1 1118.6 106.2 1122.7 106.3 1126.8 106.5 1130.9 106.6 1135 106.8 1139.1 107 1143.1 107.2 1147.2 107.4 1151.3 107.7 1155.3 108.1 1159.3 108.5 1163.3 108.9 1167.3 109.4 1171.3 110 1175.2 110.6 1179.1 111.3 1182.9 112.1 1186.8 113 1190.6 114 1194.3 115 1198 116.1 1201.7 117.4 1205.3 118.7 1208.9 120.2 1212.4 121.8 1215.9 123.5 1219.3 125.3 1222.6 127.2 1225.9 129.3 1229.1 131.4 1232.3 133.7 1235.4 136 1238.4 138.5 1241.3 141 1244.1 143.6 1246.9 146.4 1249.6 149.2 1252.2 152.1 1254.7 155.1 1257.2 158.2 1259.5 161.4 1261.7 164.6 1263.9 168 1265.9 171.4 1267.9 174.8 1269.7 178.4 1271.4 182 1273 185.6 1274.5 189.4 1275.9 193.1 1277.2 197 1278.3 200.9 1279.4 204.8 1280.3 208.8 1281.1 212.8 1281.8 216.8 1282.3 220.9 1282.8 225 1283.1 229.1 1283.3 233.2 1283.4 237.3 1283.3 241.4 1283.2 245.5 1282.9 249.6 1282.5 253.6 1282 257.7 1281.3 261.7 1280.6 265.7 1279.7 269.7 1278.7 273.6 1277.5 277.5 1276.2 281.3 1274.9 285 1273.3 288.8 1271.7 292.4 1269.9 296 1268 299.5 1266 302.9 1263.8 306.2 1261.5 309.4 1259.1 312.6 1256.6 315.6 1253.9 318.6 1251.1 321.4 1248.2 324.1 1245.1 326.7 1241.9 329.1 1238.6 331.5 1235.2 333.7 1231.6 335.7 1227.8 337.6 1224 339.4 1220 341"/><path id="t30" d="M1220 341 C1210 344.3 1200.3 348.5 1190 351 C1179.6 353.5 1168.7 354.3 1158 356"/><path id="t31" d="M630 126 L826 135.5"/><path id="t32" d="M661 141.5 L868.8 151"/><path id="t33" d="M826 135.5 830 134.5 833.9 133.4 837.9 132.5 841.9 131.5 845.9 130.6 849.9 129.8 853.9 129 857.9 128.2 861.9 127.4 865.9 126.8 869.9 126.1 874 125.5 878 124.9 882 124.4 886.1 123.9 890.1 123.5 894.1 123.1 898.2 122.7 902.2 122.4 906.3 122.1 910.3 121.9 914.4 121.7 918.4 121.6 922.5 121.5 926.5 121.4 930.5 121.4 934.6 121.4 938.6 121.5 942.7 121.6 946.7 121.8 950.7 122 954.7 122.2 958.8 122.5 962.8 122.8 966.8 123.2 970.8 123.6 974.8 124.1 978.8 124.6 982.8 125.2 986.7 125.8 990.7 126.4 994.7 127.1 998.6 127.8 1002.6 128.6 1006.5 129.5 1010.4 130.3 1014.4 131.2 1018.3 132.2 1022.2 133.2 1026 134.3 1029.9 135.4 1033.8 136.5 1037.6 137.7 1041.5 139 1045.3 140.2 1049.1 141.6 1052.9 142.9 1056.7 144.4 1060.4 145.8 1064.2 147.3 1068 148.8 1071.7 150.4 1075.5 152 1079.2 153.6 1082.9 155.2 1086.6 156.9 1090.3 158.6 1094 160.3 1097.7 162.1 1101.4 163.8 1105.1 165.6 1108.8 167.4 1112.4 169.2 1116.1 171 1119.8 172.9 1123.4 174.7 1127.1 176.6 1130.7 178.4 1134.4 180.3 1138 182.2 1141.7 184 1145.3 185.9 1149 187.8 1152.6 189.6 1156.3 191.5 1159.9 193.4 1163.6 195.2 1167.2 197 1170.9 198.9 1174.5 200.7 1178.2 202.5 1181.9 204.2 1185.5 206 1189.2 207.7 1192.9 209.4 1196.5 211.1 1200.2 212.8 1203.9 214.4 1207.6 216 1211.3 217.6 1215.1 219.2 1218.8 220.7 1222.5 222.2 1226.2 223.6 1230 225"/><path id="t34" d="M826 136 829.9 136.6 833.8 137.1 837.8 137.5 841.8 137.9 845.9 138.3 849.9 138.6 854 138.9 858.1 139.1 862.3 139.4 866.4 139.6 870.5 139.8 874.7 140 878.8 140.3 882.9 140.5 887.1 140.8 891.2 141.2 895.3 141.5 899.4 141.9 903.4 142.4 907.5 142.9 911.5 143.6 915.4 144.2 919.4 145 923.3 145.9 927.1 146.8 930.9 147.9 934.6 149.1 938.3 150.4 941.9 151.9 945.5 153.5 949 155.2 952.4 157.1 955.8 159.1 959 161.2 962.3 163.5 965.4 165.8 968.5 168.3 971.4 171 974.4 173.7 977.2 176.5 979.9 179.5 982.6 182.5 985.2 185.6 987.7 188.8 990.2 192.1 992.5 195.4 994.8 198.9 997 202.4 999 205.9 1001.1 209.5 1003 213.2 1004.8 216.9 1006.5 220.7 1008.2 224.5 1009.7 228.4 1011.2 232.2 1012.6 236.1 1013.8 240.1 1015 244"/><path id="t35" d="M1015 244 L1051 297"/><path id="t36" d="M868.8 151 873.2 151.3 877.5 151.7 881.8 152.2 886 152.9 890.1 153.7 894.1 154.6 898.1 155.6 902 156.8 905.9 158.1 909.7 159.6 913.4 161.1 917 162.8 920.6 164.5 924.2 166.4 927.6 168.4 931 170.5 934.3 172.6 937.6 174.9 940.8 177.3 943.9 179.7 947 182.3 950 184.9 953 187.6 955.8 190.4 958.7 193.3 961.4 196.2 964.1 199.2 966.8 202.3 969.4 205.4 971.9 208.6 974.4 211.8 976.8 215.1 979.2 218.5 981.5 221.9 983.8 225.3 986.1 228.7 988.2 232.2 990.4 235.7 992.5 239.3 994.6 242.8 996.6 246.4 998.6 250 1000.5 253.6 1002.4 257.2 1004.3 260.8 1006.2 264.4 1008 268"/><path id="t37" d="M1008 268 L1025 300"/><path id="t38" d="M1090 138 C1103.3 143.3 1115.3 148.1 1130 154 C1148 161.2 1172 171.2 1190 178 C1204.6 183.5 1217 185.8 1230 192 C1243.7 198.6 1256.7 208.7 1270 217"/><path id="t39" d="M890 106 894 106.4 897.9 106.8 901.9 107.3 905.8 107.9 909.8 108.5 913.7 109.2 917.6 110 921.5 110.8 925.5 111.6 929.4 112.6 933.2 113.6 937.1 114.6 941 115.7 944.9 116.8 948.7 118 952.5 119.3 956.4 120.6 960.2 121.9 964 123.3 967.8 124.7 971.5 126.2 975.3 127.7 979 129.3 982.8 130.9 986.5 132.6 990.2 134.3 993.9 136 997.5 137.8 1001.2 139.6 1004.8 141.4 1008.4 143.3 1012 145.2 1015.5 147.2 1019.1 149.2 1022.6 151.2 1026.1 153.3 1029.6 155.4 1033 157.6 1036.4 159.7 1039.8 162 1043.2 164.2 1046.5 166.5 1049.8 168.8 1053.1 171.2 1056.4 173.6 1059.6 176 1062.8 178.5 1066 181 1069.1 183.5 1072.2 186.1 1075.3 188.7 1078.3 191.3 1081.3 194 1084.3 196.7 1087.2 199.4 1090.1 202.2 1093 205 1095.9 207.8 1098.7 210.6 1101.5 213.5 1104.2 216.4 1107 219.4 1109.7 222.3 1112.3 225.3 1115 228.3 1117.6 231.3 1120.2 234.4 1122.8 237.5 1125.4 240.6 1127.9 243.7 1130.4 246.8 1132.9 250 1135.4 253.2 1137.8 256.4 1140.2 259.6 1142.7 262.8 1145 266.1 1147.4 269.3 1149.8 272.6 1152.1 275.9 1154.4 279.2 1156.7 282.6 1159 285.9 1161.3 289.3 1163.6 292.6 1165.8 296 1168.1 299.4 1170.3 302.8 1172.5 306.2 1174.7 309.6 1176.9 313 1179.1 316.4 1181.2 319.8 1183.4 323.2 1185.6 326.7 1187.7 330.1 1189.9 333.6 1192 337"/><path id="t40" d="M1050 300 C1057.7 306.7 1064.7 313.2 1073 320 C1082.5 327.8 1093.5 338.2 1104 344 C1113.2 349 1123 351.9 1132 354 C1139.9 355.8 1147.3 355.7 1155 356.5"/><path id="t41" d="M1039 320 C1045.3 326.3 1050.9 332.8 1058 339 C1065.8 345.8 1074.7 353.5 1084 359 C1093.3 364.5 1103 368.6 1114 372 C1126.4 375.9 1141.3 377.3 1155 380"/><path id="t42" d="M1040 325 L1025 300"/><path id="t43" d="M1050 298 L1035 272"/></defs>
<use href="#t8" fill="none" stroke="#88f000" stroke-width="11.2"/><use href="#t8" fill="none" stroke="#72d000" stroke-width="5.6"/><use href="#t8" fill="none" stroke="#88f000" stroke-width="4.0"/><use href="#t10" fill="none" stroke="#88f000" stroke-width="11.2"/><use href="#t10" fill="none" stroke="#72d000" stroke-width="5.6"/><use href="#t10" fill="none" stroke="#88f000" stroke-width="4.0"/><use href="#t15" fill="none" stroke="#88f000" stroke-width="11.2"/><use href="#t15" fill="none" stroke="#72d000" stroke-width="5.6"/><use href="#t15" fill="none" stroke="#88f000" stroke-width="4.0"/><use href="#t16" fill="none" stroke="#ff2c97" stroke-width="11.2"/><use href="#t16" fill="none" stroke="#dc2a85" stroke-width="5.6"/><use href="#t16" fill="none" stroke="#ff2c97" stroke-width="4.0"/><use href="#t17" fill="none" stroke="#88f000" stroke-width="11.2"/><use href="#t17" fill="none" stroke="#72d000" stroke-width="5.6"/><use href="#t17" fill="none" stroke="#88f000" stroke-width="4.0"/><use href="#t18" fill="none" stroke="#88f000" stroke-width="11.2"/><use href="#t18" fill="none" stroke="#72d000" stroke-width="5.6"/><use href="#t18" fill="none" stroke="#88f000" stroke-width="4.0"/><use href="#t19" fill="none" stroke="#ff2c97" stroke-width="11.2"/><use href="#t19" fill="none" stroke="#dc2a85" stroke-width="5.6"/><use href="#t19" fill="none" stroke="#ff2c97" stroke-width="4.0"/><use href="#t20" fill="none" stroke="#ff2c97" stroke-width="11.2"/><use href="#t20" fill="none" stroke="#dc2a85" stroke-width="5.6"/><use href="#t20" fill="none" stroke="#ff2c97" stroke-width="4.0"/><use href="#t22" fill="none" stroke="#88f000" stroke-width="11.2"/><use href="#t22" fill="none" stroke="#72d000" stroke-width="5.6"/><use href="#t22" fill="none" stroke="#88f000" stroke-width="4.0"/><use href="#t23" fill="none" stroke="#ff2c97" stroke-width="11.2"/><use href="#t23" fill="none" stroke="#dc2a85" stroke-width="5.6"/><use href="#t23" fill="none" stroke="#ff2c97" stroke-width="4.0"/><use href="#t25" fill="none" stroke="#ff2c97" stroke-width="11.2"/><use href="#t25" fill="none" stroke="#dc2a85" stroke-width="5.6"/><use href="#t25" fill="none" stroke="#ff2c97" stroke-width="4.0"/><use href="#t26" fill="none" stroke="#88f000" stroke-width="11.2"/><use href="#t26" fill="none" stroke="#72d000" stroke-width="5.6"/><use href="#t26" fill="none" stroke="#88f000" stroke-width="4.0"/><use href="#t27" fill="none" stroke="#ff2c97" stroke-width="11.2"/><use href="#t27" fill="none" stroke="#dc2a85" stroke-width="5.6"/><use href="#t27" fill="none" stroke="#ff2c97" stroke-width="4.0"/><use href="#t28" fill="none" stroke="#ff2c97" stroke-width="11.2"/><use href="#t28" fill="none" stroke="#dc2a85" stroke-width="5.6"/><use href="#t28" fill="none" stroke="#ff2c97" stroke-width="4.0"/><use href="#t29" fill="none" stroke="#88f000" stroke-width="11.2"/><use href="#t29" fill="none" stroke="#72d000" stroke-width="5.6"/><use href="#t29" fill="none" stroke="#88f000" stroke-width="4.0"/><use href="#t30" fill="none" stroke="#ff2c97" stroke-width="11.2"/><use href="#t30" fill="none" stroke="#dc2a85" stroke-width="5.6"/><use href="#t30" fill="none" stroke="#ff2c97" stroke-width="4.0"/><use href="#t31" fill="none" stroke="#ff2c97" stroke-width="11.2"/><use href="#t31" fill="none" stroke="#dc2a85" stroke-width="5.6"/><use href="#t31" fill="none" stroke="#ff2c97" stroke-width="4.0"/><use href="#t32" fill="none" stroke="#ff2c97" stroke-width="11.2"/><use href="#t32" fill="none" stroke="#dc2a85" stroke-width="5.6"/><use href="#t32" fill="none" stroke="#ff2c97" stroke-width="4.0"/><use href="#t33" fill="none" stroke="#88f000" stroke-width="11.2"/><use href="#t33" fill="none" stroke="#72d000" stroke-width="5.6"/><use href="#t33" fill="none" stroke="#88f000" stroke-width="4.0"/><use href="#t34" fill="none" stroke="#88f000" stroke-width="11.2"/><use href="#t34" fill="none" stroke="#72d000" stroke-width="5.6"/><use href="#t34" fill="none" stroke="#88f000" stroke-width="4.0"/><use href="#t35" fill="none" stroke="#ff2c97" stroke-width="11.2"/><use href="#t35" fill="none" stroke="#dc2a85" stroke-width="5.6"/><use href="#t35" fill="none" stroke="#ff2c97" stroke-width="4.0"/><use href="#t36" fill="none" stroke="#88f000" stroke-width="11.2"/><use href="#t36" fill="none" stroke="#72d000" stroke-width="5.6"/><use href="#t36" fill="none" stroke="#88f000" stroke-width="4.0"/><use href="#t37" fill="none" stroke="#ff2c97" stroke-width="11.2"/><use href="#t37" fill="none" stroke="#dc2a85" stroke-width="5.6"/><use href="#t37" fill="none" stroke="#ff2c97" stroke-width="4.0"/><use href="#t38" fill="none" stroke="#88f000" stroke-width="11.2"/><use href="#t38" fill="none" stroke="#72d000" stroke-width="5.6"/><use href="#t38" fill="none" stroke="#88f000" stroke-width="4.0"/><use href="#t39" fill="none" stroke="#88f000" stroke-width="11.2"/><use href="#t39" fill="none" stroke="#72d000" stroke-width="5.6"/><use href="#t39" fill="none" stroke="#88f000" stroke-width="4.0"/><use href="#t42" fill="none" stroke="#ff2c97" stroke-width="11.2"/><use href="#t42" fill="none" stroke="#dc2a85" stroke-width="5.6"/><use href="#t42" fill="none" stroke="#ff2c97" stroke-width="4.0"/><use href="#t43" fill="none" stroke="#ff2c97" stroke-width="11.2"/><use href="#t43" fill="none" stroke="#dc2a85" stroke-width="5.6"/><use href="#t43" fill="none" stroke="#ff2c97" stroke-width="4.0"/>
<use href="#t0" fill="none" stroke="#cf8c34" stroke-width="11.2"/><use href="#t0" fill="none" stroke="#ff9a00" stroke-width="9.8"/><use href="#t0" fill="none" stroke="#d98a24" stroke-width="5.6"/><use href="#t0" fill="none" stroke="#ff9a00" stroke-width="4.0"/><use href="#t1" fill="none" stroke="#cc4a88" stroke-width="11.2"/><use href="#t1" fill="none" stroke="#ff2c97" stroke-width="9.8"/><use href="#t1" fill="none" stroke="#dc2a85" stroke-width="5.6"/><use href="#t1" fill="none" stroke="#ff2c97" stroke-width="4.0"/><use href="#t2" fill="none" stroke="#cf8c34" stroke-width="11.2"/><use href="#t2" fill="none" stroke="#ff9a00" stroke-width="9.8"/><use href="#t2" fill="none" stroke="#d98a24" stroke-width="5.6"/><use href="#t2" fill="none" stroke="#ff9a00" stroke-width="4.0"/><use href="#t3" fill="none" stroke="#cf8c34" stroke-width="11.2"/><use href="#t3" fill="none" stroke="#ff9a00" stroke-width="9.8"/><use href="#t3" fill="none" stroke="#d98a24" stroke-width="5.6"/><use href="#t3" fill="none" stroke="#ff9a00" stroke-width="4.0"/><use href="#t4" fill="none" stroke="#cf8c34" stroke-width="11.2"/><use href="#t4" fill="none" stroke="#ff9a00" stroke-width="9.8"/><use href="#t4" fill="none" stroke="#d98a24" stroke-width="5.6"/><use href="#t4" fill="none" stroke="#ff9a00" stroke-width="4.0"/><use href="#t5" fill="none" stroke="#cf8c34" stroke-width="11.2"/><use href="#t5" fill="none" stroke="#ff9a00" stroke-width="9.8"/><use href="#t5" fill="none" stroke="#d98a24" stroke-width="5.6"/><use href="#t5" fill="none" stroke="#ff9a00" stroke-width="4.0"/><use href="#t6" fill="none" stroke="#cf8c34" stroke-width="11.2"/><use href="#t6" fill="none" stroke="#ff9a00" stroke-width="9.8"/><use href="#t6" fill="none" stroke="#d98a24" stroke-width="5.6"/><use href="#t6" fill="none" stroke="#ff9a00" stroke-width="4.0"/><use href="#t7" fill="none" stroke="#cf8c34" stroke-width="11.2"/><use href="#t7" fill="none" stroke="#ff9a00" stroke-width="9.8"/><use href="#t7" fill="none" stroke="#d98a24" stroke-width="5.6"/><use href="#t7" fill="none" stroke="#ff9a00" stroke-width="4.0"/><use href="#t9" fill="none" stroke="#cf8c34" stroke-width="11.2"/><use href="#t9" fill="none" stroke="#ff9a00" stroke-width="9.8"/><use href="#t9" fill="none" stroke="#d98a24" stroke-width="5.6"/><use href="#t9" fill="none" stroke="#ff9a00" stroke-width="4.0"/><use href="#t11" fill="none" stroke="#cc4a88" stroke-width="11.2"/><use href="#t11" fill="none" stroke="#ff2c97" stroke-width="9.8"/><use href="#t11" fill="none" stroke="#dc2a85" stroke-width="5.6"/><use href="#t11" fill="none" stroke="#ff2c97" stroke-width="4.0"/><use href="#t12" fill="none" stroke="#cc4a88" stroke-width="11.2"/><use href="#t12" fill="none" stroke="#ff2c97" stroke-width="9.8"/><use href="#t12" fill="none" stroke="#dc2a85" stroke-width="5.6"/><use href="#t12" fill="none" stroke="#ff2c97" stroke-width="4.0"/><use href="#t13" fill="none" stroke="#cc4a88" stroke-width="11.2"/><use href="#t13" fill="none" stroke="#ff2c97" stroke-width="9.8"/><use href="#t13" fill="none" stroke="#dc2a85" stroke-width="5.6"/><use href="#t13" fill="none" stroke="#ff2c97" stroke-width="4.0"/><use href="#t14" fill="none" stroke="#cc4a88" stroke-width="11.2"/><use href="#t14" fill="none" stroke="#ff2c97" stroke-width="9.8"/><use href="#t14" fill="none" stroke="#dc2a85" stroke-width="5.6"/><use href="#t14" fill="none" stroke="#ff2c97" stroke-width="4.0"/><use href="#t24" fill="none" stroke="#cc4a88" stroke-width="11.2"/><use href="#t24" fill="none" stroke="#ff2c97" stroke-width="9.8"/><use href="#t24" fill="none" stroke="#dc2a85" stroke-width="5.6"/><use href="#t24" fill="none" stroke="#ff2c97" stroke-width="4.0"/><use href="#t40" fill="none" stroke="#cc4a88" stroke-width="11.2"/><use href="#t40" fill="none" stroke="#ff2c97" stroke-width="9.8"/><use href="#t40" fill="none" stroke="#dc2a85" stroke-width="5.6"/><use href="#t40" fill="none" stroke="#ff2c97" stroke-width="4.0"/><use href="#t41" fill="none" stroke="#cc4a88" stroke-width="11.2"/><use href="#t41" fill="none" stroke="#ff2c97" stroke-width="9.8"/><use href="#t41" fill="none" stroke="#dc2a85" stroke-width="5.6"/><use href="#t41" fill="none" stroke="#ff2c97" stroke-width="4.0"/>
<use href="#t21" fill="none" stroke="#88f000" stroke-width="11.2"/><use href="#t21" fill="none" stroke="#72d000" stroke-width="5.6"/><use href="#t21" fill="none" stroke="#88f000" stroke-width="4.0"/>
<path d="M942.2 119.8 L979 125.9 L975.3 151.6 L938.6 139.4 Z" fill="#8e4e0c" stroke="#6a3a12" stroke-width="0.8"/><path d="M942.2 119.8 L979 125.9 L977.1 138.8 L940.4 129.6 Z" fill="#a96c38" stroke="#7a4a22" stroke-width="0.6"/><path d="M979 125.9 L1015.6 135.7 L1009.5 161.4 L974 151.6 Z" fill="#8e4e0c" stroke="#6a3a12" stroke-width="0.8"/><path d="M979 125.9 L1015.6 135.7 L1012.5 148.6 L976.5 138.8 Z" fill="#a96c38" stroke="#7a4a22" stroke-width="0.6"/><path d="M1015.6 135.7 L1053.5 145.5 L1050.5 171.2 L1009.5 161.4 Z" fill="#8e4e0c" stroke="#6a3a12" stroke-width="0.8"/><path d="M1015.6 135.7 L1053.5 145.5 L1052 158.3 L1012.5 148.6 Z" fill="#a96c38" stroke="#7a4a22" stroke-width="0.6"/><path d="M1053.5 145.5 L1090.2 155.3 L1087.8 182.2 L1050.5 171.2 Z" fill="#8e4e0c" stroke="#6a3a12" stroke-width="0.8"/><path d="M1053.5 145.5 L1090.2 155.3 L1089 168.8 L1052 158.3 Z" fill="#a96c38" stroke="#7a4a22" stroke-width="0.6"/><circle cx="961.6" cy="149.6" r="2.2" fill="#9a5a1c" stroke="#5a2c06" stroke-width="0.7"/><circle cx="997.6" cy="158.6" r="2.2" fill="#9a5a1c" stroke="#5a2c06" stroke-width="0.7"/><circle cx="1033.4" cy="169.3" r="2.2" fill="#9a5a1c" stroke="#5a2c06" stroke-width="0.7"/><circle cx="950" cy="137.5" r="2.2" fill="#9a5a1c" stroke="#5a2c06" stroke-width="0.7"/><circle cx="985.5" cy="146.5" r="2.2" fill="#9a5a1c" stroke="#5a2c06" stroke-width="0.7"/><circle cx="1060.5" cy="167" r="2.2" fill="#9a5a1c" stroke="#5a2c06" stroke-width="0.7"/>
<use href="#t8" fill="none" stroke="rgba(255,255,255,0.78)" stroke-width="11.2" stroke-dasharray="5.6 5.6" stroke-dashoffset="0"/><use href="#t10" fill="none" stroke="rgba(255,255,255,0.78)" stroke-width="11.2" stroke-dasharray="5.6 5.6" stroke-dashoffset="0"/><use href="#t15" fill="none" stroke="rgba(255,255,255,0.78)" stroke-width="11.2" stroke-dasharray="5.6 5.6" stroke-dashoffset="5.6"/><use href="#t16" fill="none" stroke="rgba(255,255,255,0.72)" stroke-width="11.2" stroke-dasharray="5.6 5.6" stroke-dashoffset="0"/><use href="#t17" fill="none" stroke="rgba(255,255,255,0.78)" stroke-width="11.2" stroke-dasharray="5.6 5.6" stroke-dashoffset="5.6"/><use href="#t18" fill="none" stroke="rgba(255,255,255,0.78)" stroke-width="11.2" stroke-dasharray="5.6 5.6" stroke-dashoffset="0"/><use href="#t19" fill="none" stroke="rgba(255,255,255,0.72)" stroke-width="11.2" stroke-dasharray="5.6 5.6" stroke-dashoffset="0"/><use href="#t20" fill="none" stroke="rgba(255,255,255,0.72)" stroke-width="11.2" stroke-dasharray="5.6 5.6" stroke-dashoffset="0"/><use href="#t21" fill="none" stroke="rgba(255,255,255,0.78)" stroke-width="11.2" stroke-dasharray="5.6 5.6" stroke-dashoffset="0"/><use href="#t22" fill="none" stroke="rgba(255,255,255,0.78)" stroke-width="11.2" stroke-dasharray="5.6 5.6" stroke-dashoffset="1.4"/><use href="#t23" fill="none" stroke="rgba(255,255,255,0.72)" stroke-width="11.2" stroke-dasharray="5.6 5.6" stroke-dashoffset="0"/><use href="#t25" fill="none" stroke="rgba(255,255,255,0.72)" stroke-width="11.2" stroke-dasharray="5.6 5.6" stroke-dashoffset="0"/><use href="#t26" fill="none" stroke="rgba(255,255,255,0.78)" stroke-width="11.2" stroke-dasharray="5.6 5.6" stroke-dashoffset="0"/><use href="#t27" fill="none" stroke="rgba(255,255,255,0.72)" stroke-width="11.2" stroke-dasharray="5.6 5.6" stroke-dashoffset="0"/><use href="#t28" fill="none" stroke="rgba(255,255,255,0.72)" stroke-width="11.2" stroke-dasharray="5.6 5.6" stroke-dashoffset="0"/><use href="#t29" fill="none" stroke="rgba(255,255,255,0.78)" stroke-width="11.2" stroke-dasharray="5.6 5.6" stroke-dashoffset="0"/><use href="#t30" fill="none" stroke="rgba(255,255,255,0.72)" stroke-width="11.2" stroke-dasharray="5.6 5.6" stroke-dashoffset="0"/><use href="#t31" fill="none" stroke="rgba(255,255,255,0.72)" stroke-width="11.2" stroke-dasharray="5.6 5.6" stroke-dashoffset="0"/><use href="#t32" fill="none" stroke="rgba(255,255,255,0.72)" stroke-width="11.2" stroke-dasharray="5.6 5.6" stroke-dashoffset="0"/><use href="#t33" fill="none" stroke="rgba(255,255,255,0.78)" stroke-width="11.2" stroke-dasharray="5.6 5.6" stroke-dashoffset="0"/><use href="#t34" fill="none" stroke="rgba(255,255,255,0.78)" stroke-width="11.2" stroke-dasharray="5.6 5.6" stroke-dashoffset="0"/><use href="#t35" fill="none" stroke="rgba(255,255,255,0.72)" stroke-width="11.2" stroke-dasharray="5.6 5.6" stroke-dashoffset="0"/><use href="#t36" fill="none" stroke="rgba(255,255,255,0.78)" stroke-width="11.2" stroke-dasharray="5.6 5.6" stroke-dashoffset="0"/><use href="#t37" fill="none" stroke="rgba(255,255,255,0.72)" stroke-width="11.2" stroke-dasharray="5.6 5.6" stroke-dashoffset="0"/><use href="#t38" fill="none" stroke="rgba(255,255,255,0.78)" stroke-width="11.2" stroke-dasharray="5.6 5.6" stroke-dashoffset="0"/><use href="#t39" fill="none" stroke="rgba(255,255,255,0.78)" stroke-width="11.2" stroke-dasharray="5.6 5.6" stroke-dashoffset="0"/><use href="#t42" fill="none" stroke="rgba(255,255,255,0.72)" stroke-width="11.2" stroke-dasharray="5.6 5.6" stroke-dashoffset="0"/><use href="#t43" fill="none" stroke="rgba(255,255,255,0.72)" stroke-width="11.2" stroke-dasharray="5.6 5.6" stroke-dashoffset="0"/>
<line x1="185" y1="60.8" x2="182" y2="50.6" stroke="#9a5a10" stroke-width="0.8"/><line x1="289.2" y1="47.5" x2="289.1" y2="36.9" stroke="#9a5a10" stroke-width="0.8"/><line x1="59.9" y1="221.4" x2="49.4" y2="221.7" stroke="#9a5a10" stroke-width="0.8"/><line x1="58.1" y1="451" x2="47.6" y2="449.6" stroke="#9a5a10" stroke-width="0.8"/><line x1="142.3" y1="632" x2="136.9" y2="641.1" stroke="#9a5a10" stroke-width="0.8"/><line x1="341.6" y1="608.1" x2="349.6" y2="615.2" stroke="#9a5a10" stroke-width="0.8"/><line x1="327.4" y1="341.6" x2="337.6" y2="339" stroke="#9a5a10" stroke-width="0.8"/><line x1="361.5" y1="408" x2="370.1" y2="401.8" stroke="#9a5a10" stroke-width="0.8"/><line x1="397.3" y1="480.6" x2="407.9" y2="480.2" stroke="#9a5a10" stroke-width="0.8"/><line x1="443.6" y1="157.6" x2="445.4" y2="168" stroke="#9a5a10" stroke-width="0.8"/><line x1="510.5" y1="154" x2="510.3" y2="164.6" stroke="#9a5a10" stroke-width="0.8"/><line x1="414.5" y1="49" x2="414.6" y2="38.4" stroke="#9a5a10" stroke-width="0.8"/><line x1="582" y1="53.1" x2="582.5" y2="42.5" stroke="#9a5a10" stroke-width="0.8"/><line x1="416.1" y1="75.7" x2="415.9" y2="86.3" stroke="#a0206a" stroke-width="0.8"/><line x1="580.8" y1="78.7" x2="580.6" y2="89.3" stroke="#a0206a" stroke-width="0.8"/><line x1="472.8" y1="97.1" x2="472.6" y2="107.7" stroke="#a0206a" stroke-width="0.8"/><line x1="463.8" y1="118.7" x2="463.8" y2="129.3" stroke="#a0206a" stroke-width="0.8"/><line x1="367.1" y1="134.7" x2="367.1" y2="145.3" stroke="#a0206a" stroke-width="0.8"/><line x1="227.4" y1="73.7" x2="228.6" y2="84.3" stroke="#a0206a" stroke-width="0.8"/><line x1="288.1" y1="74.3" x2="287.9" y2="84.9" stroke="#a0206a" stroke-width="0.8"/><line x1="225.4" y1="94.7" x2="226.6" y2="105.3" stroke="#a0206a" stroke-width="0.8"/><line x1="282.6" y1="95.1" x2="282.5" y2="105.7" stroke="#a0206a" stroke-width="0.8"/><line x1="153.5" y1="93.7" x2="159.1" y2="102.7" stroke="#a0206a" stroke-width="0.8"/><line x1="95.9" y1="149.9" x2="104.9" y2="155.6" stroke="#a0206a" stroke-width="0.8"/><line x1="160.7" y1="112.5" x2="166.3" y2="121.5" stroke="#a0206a" stroke-width="0.8"/><line x1="110.5" y1="162.7" x2="119.5" y2="168.3" stroke="#a0206a" stroke-width="0.8"/><line x1="73.7" y1="228.3" x2="84.3" y2="227.7" stroke="#a0206a" stroke-width="0.8"/><line x1="92.7" y1="228.2" x2="103.3" y2="227.8" stroke="#a0206a" stroke-width="0.8"/><line x1="275.2" y1="133.2" x2="280.3" y2="142.5" stroke="#a0206a" stroke-width="0.8"/><line x1="221.5" y1="185" x2="230.9" y2="190" stroke="#a0206a" stroke-width="0.8"/><line x1="204.7" y1="250.9" x2="215.3" y2="250.5" stroke="#a0206a" stroke-width="0.8"/><line x1="301.1" y1="148.3" x2="306.3" y2="157.5" stroke="#a0206a" stroke-width="0.8"/><line x1="252.8" y1="196.5" x2="262.2" y2="201.4" stroke="#a0206a" stroke-width="0.8"/><line x1="238" y1="264.2" x2="248.5" y2="263.3" stroke="#a0206a" stroke-width="0.8"/><line x1="339" y1="118.7" x2="339" y2="129.3" stroke="#a0206a" stroke-width="0.8"/><line x1="367.1" y1="134.7" x2="367.1" y2="145.3" stroke="#a0206a" stroke-width="0.8"/><line x1="229.6" y1="327" x2="238.5" y2="321.2" stroke="#a0206a" stroke-width="0.8"/><line x1="284.6" y1="380.9" x2="290.7" y2="372.1" stroke="#a0206a" stroke-width="0.8"/><line x1="331.8" y1="422.5" x2="341" y2="417.3" stroke="#a0206a" stroke-width="0.8"/><line x1="346.7" y1="486.9" x2="357.3" y2="487.1" stroke="#a0206a" stroke-width="0.8"/><line x1="256.2" y1="323.2" x2="265.4" y2="318" stroke="#a0206a" stroke-width="0.8"/><line x1="301.1" y1="373.8" x2="306.8" y2="364.8" stroke="#a0206a" stroke-width="0.8"/><line x1="370.7" y1="486.9" x2="381.3" y2="487.1" stroke="#a0206a" stroke-width="0.8"/><line x1="121.5" y1="547.5" x2="112.2" y2="552.5" stroke="#a0206a" stroke-width="0.8"/><line x1="165.8" y1="591.6" x2="160.2" y2="600.6" stroke="#a0206a" stroke-width="0.8"/><line x1="226.1" y1="607.7" x2="225.9" y2="618.3" stroke="#a0206a" stroke-width="0.8"/><line x1="286.5" y1="591.5" x2="291.5" y2="600.8" stroke="#a0206a" stroke-width="0.8"/><line x1="330.6" y1="547.2" x2="339.6" y2="552.8" stroke="#a0206a" stroke-width="0.8"/><line x1="104.5" y1="558.5" x2="95.2" y2="563.5" stroke="#a0206a" stroke-width="0.8"/><line x1="156.8" y1="610.7" x2="151.2" y2="619.7" stroke="#a0206a" stroke-width="0.8"/><line x1="228.1" y1="629.7" x2="227.9" y2="640.3" stroke="#a0206a" stroke-width="0.8"/><line x1="299.5" y1="610.5" x2="304.5" y2="619.8" stroke="#a0206a" stroke-width="0.8"/><line x1="351.7" y1="558.2" x2="360.7" y2="563.8" stroke="#a0206a" stroke-width="0.8"/><line x1="85.3" y1="487.1" x2="74.7" y2="486.9" stroke="#a0206a" stroke-width="0.8"/><line x1="105.3" y1="487" x2="94.7" y2="487" stroke="#a0206a" stroke-width="0.8"/><line x1="861.7" y1="175.6" x2="857.8" y2="185.5" stroke="#9a5a10" stroke-width="0.8"/><line x1="924.9" y1="216.4" x2="917.5" y2="223.9" stroke="#9a5a10" stroke-width="0.8"/><line x1="1093" y1="383.3" x2="1089" y2="393.1" stroke="#9a5a10" stroke-width="0.8"/><line x1="1209.2" y1="398.2" x2="1211.6" y2="408.6" stroke="#9a5a10" stroke-width="0.8"/><line x1="1291.6" y1="342" x2="1299.9" y2="348.6" stroke="#9a5a10" stroke-width="0.8"/><line x1="1326.6" y1="241.7" x2="1337.2" y2="241.9" stroke="#9a5a10" stroke-width="0.8"/><line x1="1278.4" y1="117.2" x2="1286.3" y2="110.1" stroke="#9a5a10" stroke-width="0.8"/><line x1="1177.9" y1="67.6" x2="1179.3" y2="57.1" stroke="#9a5a10" stroke-width="0.8"/><line x1="1082.2" y1="68.5" x2="1081" y2="58" stroke="#9a5a10" stroke-width="0.8"/><line x1="1004" y1="89.3" x2="1004" y2="78.7" stroke="#a0206a" stroke-width="0.8"/><line x1="1039" y1="89.3" x2="1039" y2="78.7" stroke="#a0206a" stroke-width="0.8"/><line x1="1099.8" y1="89.3" x2="1099.8" y2="78.7" stroke="#a0206a" stroke-width="0.8"/>
<g transform="translate(638 85) rotate(0) scale(1.0)"><path d="M-22 -10 L-6 -10 L0 -4.5 L0 4.5 L-6 10 L-22 10" fill="none" stroke="#4a4a4a" stroke-width="3.4" stroke-linejoin="miter"/><path d="M-22 -10 L-6 -10 L0 -4.5 L0 4.5 L-6 10 L-22 10" fill="none" stroke="#8d8d8d" stroke-width="1.8"/></g><g transform="translate(576 104) rotate(0) scale(1.0)"><path d="M-22 -10 L-6 -10 L0 -4.5 L0 4.5 L-6 10 L-22 10" fill="none" stroke="#4a4a4a" stroke-width="3.4" stroke-linejoin="miter"/><path d="M-22 -10 L-6 -10 L0 -4.5 L0 4.5 L-6 10 L-22 10" fill="none" stroke="#8d8d8d" stroke-width="1.8"/></g><g transform="translate(630 125.5) rotate(0) scale(1.0)"><path d="M-22 -10 L-6 -10 L0 -4.5 L0 4.5 L-6 10 L-22 10" fill="none" stroke="#4a4a4a" stroke-width="3.4" stroke-linejoin="miter"/><path d="M-22 -10 L-6 -10 L0 -4.5 L0 4.5 L-6 10 L-22 10" fill="none" stroke="#8d8d8d" stroke-width="1.8"/></g><g transform="translate(661 141) rotate(0) scale(1.0)"><path d="M-22 -10 L-6 -10 L0 -4.5 L0 4.5 L-6 10 L-22 10" fill="none" stroke="#4a4a4a" stroke-width="3.4" stroke-linejoin="miter"/><path d="M-22 -10 L-6 -10 L0 -4.5 L0 4.5 L-6 10 L-22 10" fill="none" stroke="#8d8d8d" stroke-width="1.8"/></g><g transform="translate(984 84) rotate(180) scale(1.0)"><path d="M-22 -10 L-6 -10 L0 -4.5 L0 4.5 L-6 10 L-22 10" fill="none" stroke="#4a4a4a" stroke-width="3.4" stroke-linejoin="miter"/><path d="M-22 -10 L-6 -10 L0 -4.5 L0 4.5 L-6 10 L-22 10" fill="none" stroke="#8d8d8d" stroke-width="1.8"/></g><g transform="translate(1156 84) rotate(0) scale(1.0)"><path d="M-22 -10 L-6 -10 L0 -4.5 L0 4.5 L-6 10 L-22 10" fill="none" stroke="#4a4a4a" stroke-width="3.4" stroke-linejoin="miter"/><path d="M-22 -10 L-6 -10 L0 -4.5 L0 4.5 L-6 10 L-22 10" fill="none" stroke="#8d8d8d" stroke-width="1.8"/></g><g transform="translate(80.7 284) rotate(90) scale(1.0)"><path d="M-22 -10 L-6 -10 L0 -4.5 L0 4.5 L-6 10 L-22 10" fill="none" stroke="#4a4a4a" stroke-width="3.4" stroke-linejoin="miter"/><path d="M-22 -10 L-6 -10 L0 -4.5 L0 4.5 L-6 10 L-22 10" fill="none" stroke="#8d8d8d" stroke-width="1.8"/></g><g transform="translate(99.6 284) rotate(90) scale(1.0)"><path d="M-22 -10 L-6 -10 L0 -4.5 L0 4.5 L-6 10 L-22 10" fill="none" stroke="#4a4a4a" stroke-width="3.4" stroke-linejoin="miter"/><path d="M-22 -10 L-6 -10 L0 -4.5 L0 4.5 L-6 10 L-22 10" fill="none" stroke="#8d8d8d" stroke-width="1.8"/></g><g transform="translate(80.7 431) rotate(-90) scale(1.0)"><path d="M-22 -10 L-6 -10 L0 -4.5 L0 4.5 L-6 10 L-22 10" fill="none" stroke="#4a4a4a" stroke-width="3.4" stroke-linejoin="miter"/><path d="M-22 -10 L-6 -10 L0 -4.5 L0 4.5 L-6 10 L-22 10" fill="none" stroke="#8d8d8d" stroke-width="1.8"/></g><g transform="translate(99.6 431) rotate(-90) scale(1.0)"><path d="M-22 -10 L-6 -10 L0 -4.5 L0 4.5 L-6 10 L-22 10" fill="none" stroke="#4a4a4a" stroke-width="3.4" stroke-linejoin="miter"/><path d="M-22 -10 L-6 -10 L0 -4.5 L0 4.5 L-6 10 L-22 10" fill="none" stroke="#8d8d8d" stroke-width="1.8"/></g><g transform="translate(1157 356.5) rotate(0) scale(1.0)"><path d="M-22 -10 L-6 -10 L0 -4.5 L0 4.5 L-6 10 L-22 10" fill="none" stroke="#4a4a4a" stroke-width="3.4" stroke-linejoin="miter"/><path d="M-22 -10 L-6 -10 L0 -4.5 L0 4.5 L-6 10 L-22 10" fill="none" stroke="#8d8d8d" stroke-width="1.8"/></g><g transform="translate(1157 380) rotate(0) scale(1.0)"><path d="M-22 -10 L-6 -10 L0 -4.5 L0 4.5 L-6 10 L-22 10" fill="none" stroke="#4a4a4a" stroke-width="3.4" stroke-linejoin="miter"/><path d="M-22 -10 L-6 -10 L0 -4.5 L0 4.5 L-6 10 L-22 10" fill="none" stroke="#8d8d8d" stroke-width="1.8"/></g><g transform="translate(1062 312) rotate(55) scale(1.0)"><path d="M-22 -10 L-6 -10 L0 -4.5 L0 4.5 L-6 10 L-22 10" fill="none" stroke="#4a4a4a" stroke-width="3.4" stroke-linejoin="miter"/><path d="M-22 -10 L-6 -10 L0 -4.5 L0 4.5 L-6 10 L-22 10" fill="none" stroke="#8d8d8d" stroke-width="1.8"/></g><g transform="translate(1048 334) rotate(55) scale(1.0)"><path d="M-22 -10 L-6 -10 L0 -4.5 L0 4.5 L-6 10 L-22 10" fill="none" stroke="#4a4a4a" stroke-width="3.4" stroke-linejoin="miter"/><path d="M-22 -10 L-6 -10 L0 -4.5 L0 4.5 L-6 10 L-22 10" fill="none" stroke="#8d8d8d" stroke-width="1.8"/></g><g transform="translate(1200 135) rotate(180) scale(1.0)"><path d="M-22 -10 L-6 -10 L0 -4.5 L0 4.5 L-6 10 L-22 10" fill="none" stroke="#4a4a4a" stroke-width="3.4" stroke-linejoin="miter"/><path d="M-22 -10 L-6 -10 L0 -4.5 L0 4.5 L-6 10 L-22 10" fill="none" stroke="#8d8d8d" stroke-width="1.8"/></g><g transform="translate(1176 152) rotate(150) scale(1.0)"><path d="M-22 -10 L-6 -10 L0 -4.5 L0 4.5 L-6 10 L-22 10" fill="none" stroke="#4a4a4a" stroke-width="3.4" stroke-linejoin="miter"/><path d="M-22 -10 L-6 -10 L0 -4.5 L0 4.5 L-6 10 L-22 10" fill="none" stroke="#8d8d8d" stroke-width="1.8"/></g><path transform="translate(1028 204) rotate(20)" d="M-3 -7 L1 -7 L1 7 L-3 7" fill="none" stroke="#4a4a4a" stroke-width="2.2"/><path transform="translate(1149 205) rotate(10)" d="M-3 -7 L1 -7 L1 7 L-3 7" fill="none" stroke="#4a4a4a" stroke-width="2.2"/><path transform="translate(1246 110) rotate(0)" d="M-3 -7 L1 -7 L1 7 L-3 7" fill="none" stroke="#4a4a4a" stroke-width="2.2"/><path transform="translate(1210 87) rotate(-30)" d="M-3 -7 L1 -7 L1 7 L-3 7" fill="none" stroke="#4a4a4a" stroke-width="2.2"/><path transform="translate(1305 196) rotate(20)" d="M-3 -7 L1 -7 L1 7 L-3 7" fill="none" stroke="#4a4a4a" stroke-width="2.2"/><path transform="translate(1248 188) rotate(30)" d="M-3 -7 L1 -7 L1 7 L-3 7" fill="none" stroke="#4a4a4a" stroke-width="2.2"/><path d="M1290 232 Q1297 275 1269 318" fill="none" stroke="#77705a" stroke-width="13"/><path d="M1290 232 Q1297 275 1269 318" fill="none" stroke="#b6ad8d" stroke-width="11.2"/><path d="M1284 236 Q1290 275 1266 314 M1290 236 Q1294 275 1271 316" fill="none" stroke="#a09478" stroke-width="0.6"/><g transform="translate(1274 229) rotate(-90) scale(0.8)"><path d="M-22 -10 L-6 -10 L0 -4.5 L0 4.5 L-6 10 L-22 10" fill="none" stroke="#4a4a4a" stroke-width="3.4" stroke-linejoin="miter"/><path d="M-22 -10 L-6 -10 L0 -4.5 L0 4.5 L-6 10 L-22 10" fill="none" stroke="#8d8d8d" stroke-width="1.8"/></g><g transform="translate(1290 244) rotate(-90) scale(0.7)"><path d="M-22 -10 L-6 -10 L0 -4.5 L0 4.5 L-6 10 L-22 10" fill="none" stroke="#4a4a4a" stroke-width="3.4" stroke-linejoin="miter"/><path d="M-22 -10 L-6 -10 L0 -4.5 L0 4.5 L-6 10 L-22 10" fill="none" stroke="#8d8d8d" stroke-width="1.8"/></g><g transform="translate(1262 244) rotate(180) scale(0.75)"><path d="M-22 -10 L-6 -10 L0 -4.5 L0 4.5 L-6 10 L-22 10" fill="none" stroke="#4a4a4a" stroke-width="3.4" stroke-linejoin="miter"/><path d="M-22 -10 L-6 -10 L0 -4.5 L0 4.5 L-6 10 L-22 10" fill="none" stroke="#8d8d8d" stroke-width="1.8"/></g><g transform="translate(1278 292) rotate(135) scale(0.8)"><path d="M-22 -10 L-6 -10 L0 -4.5 L0 4.5 L-6 10 L-22 10" fill="none" stroke="#4a4a4a" stroke-width="3.4" stroke-linejoin="miter"/><path d="M-22 -10 L-6 -10 L0 -4.5 L0 4.5 L-6 10 L-22 10" fill="none" stroke="#8d8d8d" stroke-width="1.8"/></g><g transform="translate(1272 316) rotate(110) scale(0.6)"><path d="M-22 -10 L-6 -10 L0 -4.5 L0 4.5 L-6 10 L-22 10" fill="none" stroke="#4a4a4a" stroke-width="3.4" stroke-linejoin="miter"/><path d="M-22 -10 L-6 -10 L0 -4.5 L0 4.5 L-6 10 L-22 10" fill="none" stroke="#8d8d8d" stroke-width="1.8"/></g><g transform="translate(1193 338) rotate(60) scale(0.7)"><path d="M-22 -10 L-6 -10 L0 -4.5 L0 4.5 L-6 10 L-22 10" fill="none" stroke="#4a4a4a" stroke-width="3.4" stroke-linejoin="miter"/><path d="M-22 -10 L-6 -10 L0 -4.5 L0 4.5 L-6 10 L-22 10" fill="none" stroke="#8d8d8d" stroke-width="1.8"/></g><g transform="translate(1258 212) rotate(200) scale(0.8)"><path d="M-22 -10 L-6 -10 L0 -4.5 L0 4.5 L-6 10 L-22 10" fill="none" stroke="#4a4a4a" stroke-width="3.4" stroke-linejoin="miter"/><path d="M-22 -10 L-6 -10 L0 -4.5 L0 4.5 L-6 10 L-22 10" fill="none" stroke="#8d8d8d" stroke-width="1.8"/></g><g>
<defs><clipPath id="phc"><rect x="704" y="282" width="153" height="85"/></clipPath>
<linearGradient id="wallg" x1="0" x2="1" y1="0" y2="0"><stop offset="0" stop-color="#b4b6b8"/><stop offset="0.5" stop-color="#a8aaad"/><stop offset="1" stop-color="#aeb0b3"/></linearGradient></defs>
<g clip-path="url(#phc)">
<rect x="704" y="282" width="153" height="85" fill="#6c6a66"/>
<rect x="704" y="282" width="153" height="10" fill="#5f4a3a"/>
<path d="M704 283 L760 283 L740 289 L704 289 Z" fill="#735a46"/><path d="M780 283 L857 283 L857 287 L790 289 Z" fill="#7e6856"/>
<rect x="704" y="291" width="153" height="3" fill="#3e3530"/>
<rect x="704" y="294" width="153" height="46" fill="url(#wallg)"/>
<rect x="708" y="298" width="14" height="16" fill="#c6c8ca" opacity="0.7"/><rect x="735" y="316" width="16" height="12" fill="#c2c4c6" opacity="0.6"/><rect x="768" y="300" width="14" height="20" fill="#bcbec0" opacity="0.6"/><rect x="704" y="320" width="8" height="16" fill="#c8cacc" opacity="0.6"/>
<rect x="750" y="297" width="2" height="40" fill="#bfc1c3" opacity="0.5"/>
<rect x="802" y="290" width="6" height="48" fill="#4d4237"/>
<path d="M814 311 L857 311 L857 343 L814 343 Z" fill="#3a5a8f"/>
<path d="M814 322 L822 316 L830 319 L838 313 L846 318 L857 314 L857 343 L814 343 Z" fill="#66799a"/>
<path d="M814 332 L828 327 L842 330 L857 326 L857 343 L814 343 Z" fill="#84984a"/>
<path d="M704 337 L745 335 L745 352 L704 352 Z" fill="#6a6a68"/>
<rect x="704" y="339" width="10" height="4" fill="#c4522a"/><rect x="714" y="338" width="22" height="4" fill="#505850"/>
<path d="M704 349 L760 347 L800 341 L857 340 L857 367 L704 367 Z" fill="#5d6a40"/>
<path d="M808 346 L857 336 L857 367 L815 367 Z" fill="#66695e"/>
<path d="M704 360 L760 361 L800 356 L857 352 L857 367 L704 367 Z" fill="#4e4236"/>
<path d="M757 367 L800 357 L815 352 L815 367 Z" fill="#8a8c8c"/>
<path d="M762 367 L762 364 M768 367 L768 362 M774 367 L774 361 M780 367 L780 360 M786 367 L786 359 M792 367 L792 357 M798 367 L798 356 M804 367 L804 355 M810 367 L810 354" stroke="#b0b4b4" stroke-width="1.5"/>
<path d="M815 358 L857 338 L857 343 L817 363 Z" fill="#857466"/><path d="M818 360 L832 353 L834 357 L820 364 Z" fill="#a83a30"/>
<path d="M840 350 L857 342 L857 348 L842 355 Z" fill="#3a6a40"/>
<path d="M820 345 L857 330 L857 333 L822 348 Z" fill="#556a3a"/>
<rect x="736" y="330.5" width="40" height="8" fill="#8a7262"/>
<rect x="738" y="338.4" width="37" height="10.4" fill="#ded4a8"/>
<path d="M743 341 h2 v4 h-2z M749 341 h2 v4 h-2z M755 341 h2 v4 h-2z M761 341 h2 v4 h-2z M767 341 h2 v4 h-2z" fill="#7a6a4a"/>
<circle cx="735" cy="342" r="3.5" fill="#ffcf70" opacity="0.85"/><circle cx="777.5" cy="337" r="2" fill="#ffd27a"/><circle cx="825" cy="336" r="3" fill="#e8a040" opacity="0.8"/>
<path d="M730 334 L737 323 L744 334 Z" fill="#3c5a30"/><path d="M740 334 L746 322 L752 334 Z" fill="#2f4a2a"/>
<path d="M768 354 L773 339 L778 354 Z" fill="#2a3a28"/><path d="M791 346 L795.5 325 L800 346 Z" fill="#34502e"/><path d="M801 346 L804.5 329 L808 346 Z" fill="#5a7a38"/>
<path d="M828 284 C832 292 840 296 852 296 L857 292" stroke="#e8e8e8" stroke-width="1.3" fill="none"/>
<path d="M819 284 C822 290 826 294 836 296" stroke="#d8d8d8" stroke-width="1" fill="none"/>
</g></g><line x1="869" y1="320" x2="1098" y2="256" stroke="#707070" stroke-width="1.6"/><line x1="869" y1="315" x2="869" y2="323" stroke="#707070" stroke-width="1.6"/><path d="M1103 254.5 L1076 251 L1089 257 L1083 270 Z" fill="#1a1a1a" stroke="#777" stroke-width="0.8"/><g font-size="14" fill="#000" transform="rotate(0.45 766 398)"><text x="766.5" y="398.2">Legenda :</text><text x="766.5" y="414.5">Binari Verdi - Roco Geoline in Galleria</text><text x="766.5" y="430.8">Binari Rossi - Roco Line a Vista</text><text x="766.5" y="447.3">Binari Arancioni - in pendenza 1,3% per stazione di testa</text></g><line x1="420.3" y1="184" x2="423.3" y2="203" stroke="#777" stroke-width="0.8"/><line x1="485.7" y1="174" x2="489.8" y2="193.3" stroke="#777" stroke-width="0.8"/><line x1="423.3" y1="203" x2="489.8" y2="193.3" stroke="#888" stroke-width="0.8"/><path d="M423.3 203 L430.7 205 L429.8 199 Z" fill="#444"/><path d="M489.8 193.3 L482.4 191.3 L483.3 197.3 Z" fill="#444"/><text transform="translate(456 201) rotate(-8)" font-family="Liberation Mono" font-size="7" fill="#6e6e80" text-anchor="middle">23.0 cm</text><line x1="1115.7" y1="416" x2="1114.2" y2="435.2" stroke="#777" stroke-width="0.8"/><line x1="1207.3" y1="423.7" x2="1206.3" y2="442.8" stroke="#777" stroke-width="0.8"/><line x1="1114.2" y1="435.2" x2="1206.3" y2="442.8" stroke="#888" stroke-width="0.8"/><path d="M1114.2 435.2 L1120.9 438.8 L1121.4 432.8 Z" fill="#444"/><path d="M1206.3 442.8 L1199.6 439.2 L1199.1 445.2 Z" fill="#444"/><text transform="translate(1160 441.5) rotate(5)" font-family="Liberation Mono" font-size="7" fill="#6e6e80" text-anchor="middle">31.7 cm</text><line x1="42.3" y1="551.5" x2="26.6" y2="563" stroke="#777" stroke-width="0.8"/><line x1="97" y1="633.6" x2="80" y2="641.4" stroke="#777" stroke-width="0.8"/><line x1="26.6" y1="563" x2="80" y2="641.4" stroke="#888" stroke-width="0.8"/><path d="M26.6 563 L28.1 570.5 L33 567.1 Z" fill="#444"/><path d="M80 641.4 L78.5 633.9 L73.6 637.3 Z" fill="#444"/><text transform="translate(55 602) rotate(56)" font-family="Liberation Mono" font-size="7" fill="#6e6e80" text-anchor="middle">33.9 cm</text><text transform="translate(372 430) rotate(62)" font-family="Liberation Mono" font-size="7" fill="#8a8a9a" text-anchor="middle">37.8 cm</text><circle cx="1038.5" cy="73" r="2.6" fill="#f5e600" stroke="#c8b800" stroke-width="0.5"/><circle cx="857.5" cy="101.8" r="2.6" fill="#f5e600" stroke="#c8b800" stroke-width="0.5"/><circle cx="939" cy="121.5" r="2.6" fill="#f5e600" stroke="#c8b800" stroke-width="0.5"/><circle cx="552" cy="139" r="2.6" fill="#f5e600" stroke="#c8b800" stroke-width="0.5"/><circle cx="1211" cy="226" r="2.6" fill="#f5e600" stroke="#c8b800" stroke-width="0.5"/><path d="M1015 191 L1020 184 L1023 192 Z" fill="#444"/><path d="M1026 189 L1034 186" stroke="#999" stroke-width="0.8" stroke-dasharray="2 2"/>
<g fill="#2e2e2e" stroke="rgba(255,255,255,0.35)" stroke-width="1.2" paint-order="stroke"><text transform="translate(229 45) rotate(0)" text-anchor="middle" dy="2.5" font-size="7.2">61106</text><text transform="translate(184 66.5) rotate(0)" text-anchor="middle" dy="2.5" font-size="6.5">+11.8</text><text transform="translate(286 53.5) rotate(0)" text-anchor="middle" dy="2.5" font-size="6.5">+12.3</text><text transform="translate(349 44) rotate(0)" text-anchor="middle" dy="2.5" font-size="7.2">61106</text><text transform="translate(190 84) rotate(0)" text-anchor="middle" dy="2.5" font-size="7.2">61124</text><text transform="translate(257.5 79) rotate(0)" text-anchor="middle" dy="2.5" font-size="7.2">61110</text><text transform="translate(355 80) rotate(0)" text-anchor="middle" dy="2.5" font-size="7.2">61106</text><text transform="translate(192.5 105) rotate(0)" text-anchor="middle" dy="2.5" font-size="7.2">61123</text><text transform="translate(253.5 100) rotate(0)" text-anchor="middle" dy="2.5" font-size="7.2">61110</text><text transform="translate(364 100) rotate(0)" text-anchor="middle" dy="2.5" font-size="7.2">61106</text><text transform="translate(80 123.5) rotate(0)" text-anchor="middle" dy="2.5" font-size="7.2">61106</text><text transform="translate(124 122.5) rotate(0)" text-anchor="middle" dy="2.5" font-size="7.2">61124</text><text transform="translate(136 137.5) rotate(0)" text-anchor="middle" dy="2.5" font-size="7.2">61123</text><text transform="translate(86 189) rotate(0)" text-anchor="middle" dy="2.5" font-size="7.2">61124</text><text transform="translate(102.5 194) rotate(0)" text-anchor="middle" dy="2.5" font-size="7.2">61123</text><text transform="translate(41 221.5) rotate(0)" text-anchor="middle" dy="2.5" font-size="6.5">+10.7</text><text transform="translate(80 255.5) rotate(0)" text-anchor="middle" dy="2.5" font-size="7.2">61110</text><text transform="translate(101.5 255.5) rotate(0)" text-anchor="middle" dy="2.5" font-size="7.2">61110</text><text transform="translate(306.5 128) rotate(0)" text-anchor="middle" dy="2.5" font-size="7.2">61123</text><text transform="translate(419 123.5) rotate(0)" text-anchor="middle" dy="2.5" font-size="7.2">61106</text><text transform="translate(336.5 141) rotate(0)" text-anchor="middle" dy="2.5" font-size="7.2">61123</text><text transform="translate(440 136) rotate(0)" text-anchor="middle" dy="2.5" font-size="7.2">61110</text><text transform="translate(250 161) rotate(0)" text-anchor="middle" dy="2.5" font-size="7.2">61123</text><text transform="translate(279.5 173) rotate(0)" text-anchor="middle" dy="2.5" font-size="7.2">61123</text><text transform="translate(218 217.5) rotate(0)" text-anchor="middle" dy="2.5" font-size="7.2">61123</text><text transform="translate(246.5 229.5) rotate(0)" text-anchor="middle" dy="2.5" font-size="7.2">61123</text><text transform="translate(219 288) rotate(0)" text-anchor="middle" dy="2.5" font-size="7.2">61124</text><text transform="translate(246.5 295) rotate(0)" text-anchor="middle" dy="2.5" font-size="7.2">61123</text><text transform="translate(407 176) rotate(0)" text-anchor="middle" dy="2.5" font-size="7.2">61124</text><text transform="translate(443 174.5) rotate(0)" text-anchor="middle" dy="2.5" font-size="6.5">+5.3</text><text transform="translate(350 227.5) rotate(0)" text-anchor="middle" dy="2.5" font-size="7.2">61124</text><text transform="translate(382.5 206) rotate(0)" text-anchor="middle" dy="2.5" font-size="6.5">+5.6</text><text transform="translate(344 265.5) rotate(0)" text-anchor="middle" dy="2.5" font-size="6.5">+6.0</text><text transform="translate(327 300) rotate(0)" text-anchor="middle" dy="2.5" font-size="7.2">61124</text><text transform="translate(316 341) rotate(0)" text-anchor="middle" dy="2.5" font-size="6.5">+6.3</text><text transform="translate(82.5 302.5) rotate(0)" text-anchor="middle" dy="2.5" font-size="7.2">61140</text><text transform="translate(100 309) rotate(0)" text-anchor="middle" dy="2.5" font-size="7.2">61105</text><text transform="translate(61.5 335) rotate(0)" text-anchor="middle" dy="2.5" font-size="7.2">61105</text><text transform="translate(97.6 368) rotate(0)" text-anchor="middle" dy="2.5" font-size="7.2">61140</text><text transform="translate(79.6 381) rotate(0)" text-anchor="middle" dy="2.5" font-size="7.2">61106</text><text transform="translate(100 413.4) rotate(0)" text-anchor="middle" dy="2.5" font-size="7.2">61105</text><text transform="translate(65.7 449) rotate(0)" text-anchor="middle" dy="2.5" font-size="6.5">+9.7</text><text transform="translate(81 459) rotate(0)" text-anchor="middle" dy="2.5" font-size="7.2">61110</text><text transform="translate(101 459) rotate(0)" text-anchor="middle" dy="2.5" font-size="7.2">61110</text><text transform="translate(84.7 527.5) rotate(0)" text-anchor="middle" dy="2.5" font-size="7.2">61124</text><text transform="translate(105.3 520.8) rotate(0)" text-anchor="middle" dy="2.5" font-size="7.2">61123</text><text transform="translate(65.7 567.5) rotate(0)" text-anchor="middle" dy="2.5" font-size="7.2">61106</text><text transform="translate(136 577.3) rotate(0)" text-anchor="middle" dy="2.5" font-size="7.2">61123</text><text transform="translate(123 593.7) rotate(0)" text-anchor="middle" dy="2.5" font-size="7.2">61124</text><text transform="translate(194 608.6) rotate(0)" text-anchor="middle" dy="2.5" font-size="7.2">61123</text><text transform="translate(256.8 608.6) rotate(0)" text-anchor="middle" dy="2.5" font-size="7.2">61123</text><text transform="translate(194 631.7) rotate(0)" text-anchor="middle" dy="2.5" font-size="7.2">61124</text><text transform="translate(266 631.7) rotate(0)" text-anchor="middle" dy="2.5" font-size="7.2">61124</text><text transform="translate(132.5 649.7) rotate(0)" text-anchor="middle" dy="2.5" font-size="6.5">+8.7</text><text transform="translate(258.3 663.6) rotate(0)" text-anchor="middle" dy="2.5" font-size="7.2">61106</text><text transform="translate(314 576.8) rotate(0)" text-anchor="middle" dy="2.5" font-size="7.2">61123</text><text transform="translate(332.8 593.7) rotate(0)" text-anchor="middle" dy="2.5" font-size="7.2">61124</text><text transform="translate(353.4 620) rotate(0)" text-anchor="middle" dy="2.5" font-size="6.5">+7.7</text><text transform="translate(348 519.8) rotate(0)" text-anchor="middle" dy="2.5" font-size="7.2">61123</text><text transform="translate(370.8 527.5) rotate(0)" text-anchor="middle" dy="2.5" font-size="7.2">61124</text><text transform="translate(398.6 501.3) rotate(0)" text-anchor="middle" dy="2.5" font-size="7.2">61106</text><text transform="translate(347.7 454) rotate(0)" text-anchor="middle" dy="2.5" font-size="7.2">61123</text><text transform="translate(371.8 456.6) rotate(0)" text-anchor="middle" dy="2.5" font-size="7.2">61123</text><text transform="translate(355.4 416) rotate(0)" text-anchor="middle" dy="2.5" font-size="6.5">+7.7</text><text transform="translate(336.4 395.5) rotate(0)" text-anchor="middle" dy="2.5" font-size="7.2">61124</text><text transform="translate(315.9 398) rotate(0)" text-anchor="middle" dy="2.5" font-size="7.2">61123</text><text transform="translate(343 376) rotate(0)" text-anchor="middle" dy="2.5" font-size="7.2">61124</text><text transform="translate(258.3 354.4) rotate(0)" text-anchor="middle" dy="2.5" font-size="7.2">61124</text><text transform="translate(280 351.3) rotate(0)" text-anchor="middle" dy="2.5" font-size="7.2">61123</text><text transform="translate(530 46) rotate(0)" text-anchor="middle" dy="2.5" font-size="7.2">61106</text><text transform="translate(611 53.5) rotate(0)" text-anchor="middle" dy="2.5" font-size="7.2">61141</text><text transform="translate(638.5 61) rotate(0)" text-anchor="middle" dy="2.5" font-size="6.5">+12.3</text><text transform="translate(754 60) rotate(0)" text-anchor="middle" dy="2.5" font-size="7.2">61106</text><text transform="translate(530 85) rotate(0)" text-anchor="middle" dy="2.5" font-size="7.2">61106</text><text transform="translate(610 85) rotate(0)" text-anchor="middle" dy="2.5" font-size="7.2">61110</text><text transform="translate(667.5 85) rotate(0)" text-anchor="middle" dy="2.5" font-size="7.2">61110</text><text transform="translate(690 85) rotate(0)" text-anchor="middle" dy="2.5" font-size="6.5">+12.3</text><text transform="translate(725 85) rotate(0)" text-anchor="middle" dy="2.5" font-size="7.2">61110</text><text transform="translate(772.5 85) rotate(0)" text-anchor="middle" dy="2.5" font-size="7.2">61106</text><text transform="translate(845 88) rotate(0)" text-anchor="middle" dy="2.5" font-size="6.5">+13.2</text><text transform="translate(664 72.5) rotate(0)" text-anchor="middle" dy="2.5" font-size="7.2">61140</text><text transform="translate(515 104) rotate(0)" text-anchor="middle" dy="2.5" font-size="7.2">61106</text><text transform="translate(690 106) rotate(0)" text-anchor="middle" dy="2.5" font-size="7.2">61106</text><text transform="translate(718 100) rotate(0)" text-anchor="middle" dy="2.5" font-size="7.2">61141</text><text transform="translate(735 117.5) rotate(0)" text-anchor="middle" dy="2.5" font-size="6.5">+12.3</text><text transform="translate(531.5 124.5) rotate(0)" text-anchor="middle" dy="2.5" font-size="7.2">61106</text><text transform="translate(739 131.5) rotate(0)" text-anchor="middle" dy="2.5" font-size="7.2">61106</text><text transform="translate(726 124) rotate(0)" text-anchor="middle" dy="2.5" font-size="6.5">+13.3</text><text transform="translate(821 131.5) rotate(0)" text-anchor="middle" dy="2.5" font-size="7.2">61106</text><text transform="translate(854 135) rotate(0)" text-anchor="middle" dy="2.5" font-size="7.2">61140</text><text transform="translate(454 136) rotate(0)" text-anchor="middle" dy="2.5" font-size="7.2">61106</text><text transform="translate(598 141) rotate(0)" text-anchor="middle" dy="2.5" font-size="7.2">61106</text><text transform="translate(770 148) rotate(0)" text-anchor="middle" dy="2.5" font-size="7.2">61106</text><text transform="translate(829 150) rotate(0)" text-anchor="middle" dy="2.5" font-size="7.2">61106</text><text transform="translate(479 160) rotate(0)" text-anchor="middle" dy="2.5" font-size="7.2">61106</text><text transform="translate(642.5 164) rotate(0)" text-anchor="middle" dy="2.5" font-size="7.2">61106</text><text transform="translate(730 176) rotate(0)" text-anchor="middle" dy="2.5" font-size="6.5">+5.3</text><text transform="translate(860 179) rotate(0)" text-anchor="middle" dy="2.5" font-size="7.2">61105</text><text transform="translate(862.5 115) rotate(0)" text-anchor="middle" dy="2.5" font-size="6.5">+14.7</text><text transform="translate(1066 64.7) rotate(0)" text-anchor="middle" dy="2.5" font-size="7.2">61123</text><text transform="translate(1177.6 60) rotate(0)" text-anchor="middle" dy="2.5" font-size="7.2">61106</text><text transform="translate(1091.8 73.3) rotate(0)" text-anchor="middle" dy="2.5" font-size="6.5">+0.2</text><text transform="translate(1011.6 79) rotate(0)" text-anchor="middle" dy="2.5" font-size="7.2">61140</text><text transform="translate(1069 84.7) rotate(0)" text-anchor="middle" dy="2.5" font-size="7.2">61110</text><text transform="translate(1126 84.7) rotate(0)" text-anchor="middle" dy="2.5" font-size="7.2">61110</text><text transform="translate(894 84.7) rotate(0)" text-anchor="middle" dy="2.5" font-size="7.2">61110</text><text transform="translate(951.5 84.7) rotate(0)" text-anchor="middle" dy="2.5" font-size="7.2">61110</text><text transform="translate(947.5 97.3) rotate(0)" text-anchor="middle" dy="2.5" font-size="7.2">61106</text><text transform="translate(888.6 106.5) rotate(0)" text-anchor="middle" dy="2.5" font-size="7.2">61110</text><text transform="translate(931.5 106.5) rotate(0)" text-anchor="middle" dy="2.5" font-size="7.2">61106</text><text transform="translate(1028.8 107.6) rotate(0)" text-anchor="middle" dy="2.5" font-size="7.2">61112</text><text transform="translate(1069 107.6) rotate(0)" text-anchor="middle" dy="2.5" font-size="7.2">61110</text><text transform="translate(1126 107.6) rotate(0)" text-anchor="middle" dy="2.5" font-size="7.2">61110</text><text transform="translate(1189 91.6) rotate(0)" text-anchor="middle" dy="2.5" font-size="7.2">61113</text><text transform="translate(1206 91.6) rotate(0)" text-anchor="middle" dy="2.5" font-size="7.2">61130</text><text transform="translate(1192 100) rotate(0)" text-anchor="middle" dy="2.5" font-size="7.2">61113</text><text transform="translate(1189 111.6) rotate(0)" text-anchor="middle" dy="2.5" font-size="7.2">61123</text><text transform="translate(1154.8 113.3) rotate(0)" text-anchor="middle" dy="2.5" font-size="7.2">61140</text><text transform="translate(1212 114.5) rotate(0)" text-anchor="middle" dy="2.5" font-size="7.2">61110</text><text transform="translate(1243.5 112.8) rotate(0)" text-anchor="middle" dy="2.5" font-size="7.2">61130</text><text transform="translate(1260.6 127) rotate(0)" text-anchor="middle" dy="2.5" font-size="7.2">61124</text><text transform="translate(1286 140) rotate(0)" text-anchor="middle" dy="2.5" font-size="6.5">+1.2</text><text transform="translate(1246 142) rotate(0)" text-anchor="middle" dy="2.5" font-size="7.2">61123</text><text transform="translate(1097.5 126) rotate(0)" text-anchor="middle" dy="2.5" font-size="7.2">61141</text><text transform="translate(1031.7 131.7) rotate(0)" text-anchor="middle" dy="2.5" font-size="7.2">61141</text><text transform="translate(1006 127) rotate(0)" text-anchor="middle" dy="2.5" font-size="6.5">+14.1</text><text transform="translate(1040 124.8) rotate(0)" text-anchor="middle" dy="2.5" font-size="7.2">61140</text><text transform="translate(1083 134.5) rotate(0)" text-anchor="middle" dy="2.5" font-size="7.2">61141</text><text transform="translate(1183.4 134.5) rotate(0)" text-anchor="middle" dy="2.5" font-size="7.2">61113</text><text transform="translate(1205 135.7) rotate(0)" text-anchor="middle" dy="2.5" font-size="7.2">61130</text><text transform="translate(1153.6 146) rotate(0)" text-anchor="middle" dy="2.5" font-size="7.2">61141</text><text transform="translate(1134.7 154.5) rotate(0)" text-anchor="middle" dy="2.5" font-size="7.2">61110</text><text transform="translate(1193.7 157.4) rotate(0)" text-anchor="middle" dy="2.5" font-size="7.2">61110</text><text transform="translate(1223.4 166) rotate(0)" text-anchor="middle" dy="2.5" font-size="7.2">61106</text><text transform="translate(1233.8 175.7) rotate(0)" text-anchor="middle" dy="2.5" font-size="7.2">61113</text><text transform="translate(1246.3 184.3) rotate(0)" text-anchor="middle" dy="2.5" font-size="7.2">61130</text><text transform="translate(1117.5 163) rotate(0)" text-anchor="middle" dy="2.5" font-size="7.2">61105</text><text transform="translate(1153.6 187.7) rotate(0)" text-anchor="middle" dy="2.5" font-size="7.2">61106</text><text transform="translate(1189 180.3) rotate(0)" text-anchor="middle" dy="2.5" font-size="7.2">61110</text><text transform="translate(911.5 123) rotate(0)" text-anchor="middle" dy="2.5" font-size="7.2">61140</text><text transform="translate(940 117.3) rotate(0)" text-anchor="middle" dy="2.5" font-size="7.2">61130</text><text transform="translate(914 141.4) rotate(0)" text-anchor="middle" dy="2.5" font-size="7.2">61106</text><text transform="translate(903 156.3) rotate(0)" text-anchor="middle" dy="2.5" font-size="7.2">61123</text><text transform="translate(966 127) rotate(0)" text-anchor="middle" dy="2.5" font-size="7.2">61141</text><text transform="translate(1063 146) rotate(0)" text-anchor="middle" dy="2.5" font-size="6.5">+14.3</text><text transform="translate(951.5 171.7) rotate(0)" text-anchor="middle" dy="2.5" font-size="6.5">+13.7</text><text transform="translate(968.7 169.4) rotate(0)" text-anchor="middle" dy="2.5" font-size="7.2">61123</text><text transform="translate(937 186.6) rotate(0)" text-anchor="middle" dy="2.5" font-size="6.5">+14.3</text><text transform="translate(957 189) rotate(0)" text-anchor="middle" dy="2.5" font-size="7.2">61123</text><text transform="translate(980 189) rotate(0)" text-anchor="middle" dy="2.5" font-size="7.2">61106</text><text transform="translate(1057.5 184.3) rotate(0)" text-anchor="middle" dy="2.5" font-size="7.2">61106</text><text transform="translate(1027 204.3) rotate(0)" text-anchor="middle" dy="2.5" font-size="7.2">61130</text><text transform="translate(1090.6 200.3) rotate(0)" text-anchor="middle" dy="2.5" font-size="7.2">61106</text><text transform="translate(1146 204.3) rotate(0)" text-anchor="middle" dy="2.5" font-size="7.2">61130</text><text transform="translate(1138.7 216.4) rotate(0)" text-anchor="middle" dy="2.5" font-size="6.5">+15.0</text><text transform="translate(1005.4 218.7) rotate(0)" text-anchor="middle" dy="2.5" font-size="7.2">61106</text><text transform="translate(1018.5 214.6) rotate(0)" text-anchor="middle" dy="2.5" font-size="6.5">+15.0</text><text transform="translate(967.6 220.4) rotate(0)" text-anchor="middle" dy="2.5" font-size="6.5">-0.1</text><text transform="translate(994.5 240.4) rotate(0)" text-anchor="middle" dy="2.5" font-size="7.2">61110</text><text transform="translate(924 243.3) rotate(0)" text-anchor="middle" dy="2.5" font-size="6.5">+4.3</text><text transform="translate(1239.5 204.3) rotate(0)" text-anchor="middle" dy="2.5" font-size="7.2">61110</text><text transform="translate(1245 217.5) rotate(0)" text-anchor="middle" dy="2.5" font-size="7.2">61110</text><text transform="translate(1257.8 237.5) rotate(0)" text-anchor="middle" dy="2.5" font-size="7.2">61130</text><text transform="translate(1201.7 236.4) rotate(0)" text-anchor="middle" dy="2.5" font-size="6.5">+15.0</text><text transform="translate(997.3 270.7) rotate(0)" text-anchor="middle" dy="2.5" font-size="6.5">+0.0</text><text transform="translate(1033.4 270.2) rotate(0)" text-anchor="middle" dy="2.5" font-size="7.2">61110</text><text transform="translate(1023 290.2) rotate(0)" text-anchor="middle" dy="2.5" font-size="7.2">61110</text><text transform="translate(1292 197.5) rotate(0)" text-anchor="middle" dy="2.5" font-size="7.2">61106</text><text transform="translate(1332 227.8) rotate(0)" text-anchor="middle" dy="2.5" font-size="7.2">61105</text><text transform="translate(1277.8 274.8) rotate(0)" text-anchor="middle" dy="2.5" font-size="7.2">61155</text><text transform="translate(1300.7 269) rotate(0)" text-anchor="middle" dy="2.5" font-size="7.2">61124</text><text transform="translate(1174.8 309.7) rotate(0)" text-anchor="middle" dy="2.5" font-size="7.2">61110</text><text transform="translate(1246.3 320.5) rotate(0)" text-anchor="middle" dy="2.5" font-size="7.2">61123</text><text transform="translate(1255 329) rotate(0)" text-anchor="middle" dy="2.5" font-size="7.2">61154</text><text transform="translate(1068.9 320.5) rotate(0)" text-anchor="middle" dy="2.5" font-size="7.2">61123</text><text transform="translate(1057.5 341.7) rotate(0)" text-anchor="middle" dy="2.5" font-size="7.2">61124</text><text transform="translate(1014.5 342.3) rotate(0)" text-anchor="middle" dy="2.5" font-size="7.2">61106</text><text transform="translate(1126 353.7) rotate(0)" text-anchor="middle" dy="2.5" font-size="7.2">61123</text><text transform="translate(1190 353.7) rotate(0)" text-anchor="middle" dy="2.5" font-size="7.2">61123</text><text transform="translate(1120.4 375) rotate(0)" text-anchor="middle" dy="2.5" font-size="7.2">61124</text><text transform="translate(1189 375) rotate(0)" text-anchor="middle" dy="2.5" font-size="7.2">61123</text><text transform="translate(1192 337.7) rotate(0)" text-anchor="middle" dy="2.5" font-size="7.2">61123</text><text transform="translate(1302.4 346.9) rotate(0)" text-anchor="middle" dy="2.5" font-size="6.5">+2.2</text><text transform="translate(1213.3 403.6) rotate(0)" text-anchor="middle" dy="2.5" font-size="7.2">61106</text><text transform="translate(1088.8 404.7) rotate(0)" text-anchor="middle" dy="2.5" font-size="6.5">+3.3</text></g>
<rect x="0" y="0" width="1390" height="22" fill="#ececec"/>
<rect x="0" y="0" width="19" height="699" fill="#ececec"/>
<line x1="0" y1="22.5" x2="1390" y2="22.5" stroke="#8e8e8e"/>
<line x1="19.5" y1="0" x2="19.5" y2="699" stroke="#8e8e8e"/>
<line x1="19.5" y1="12" x2="19.5" y2="22" stroke="#8e8e8e"/><text x="21.5" y="11" font-size="11" font-weight="bold" fill="#454545">0</text><line x1="48.5" y1="18" x2="48.5" y2="22" stroke="#8e8e8e"/><line x1="77.5" y1="18" x2="77.5" y2="22" stroke="#8e8e8e"/><line x1="106.5" y1="18" x2="106.5" y2="22" stroke="#8e8e8e"/><line x1="135.5" y1="18" x2="135.5" y2="22" stroke="#8e8e8e"/><line x1="164.5" y1="12" x2="164.5" y2="22" stroke="#8e8e8e"/><text x="166.5" y="11" font-size="11" font-weight="bold" fill="#454545">50</text><line x1="193.5" y1="18" x2="193.5" y2="22" stroke="#8e8e8e"/><line x1="222.5" y1="18" x2="222.5" y2="22" stroke="#8e8e8e"/><line x1="251.5" y1="18" x2="251.5" y2="22" stroke="#8e8e8e"/><line x1="280.5" y1="18" x2="280.5" y2="22" stroke="#8e8e8e"/><line x1="309.5" y1="12" x2="309.5" y2="22" stroke="#8e8e8e"/><text x="311.5" y="11" font-size="11" font-weight="bold" fill="#454545">100</text><line x1="338.5" y1="18" x2="338.5" y2="22" stroke="#8e8e8e"/><line x1="367.5" y1="18" x2="367.5" y2="22" stroke="#8e8e8e"/><line x1="396.5" y1="18" x2="396.5" y2="22" stroke="#8e8e8e"/><line x1="425.5" y1="18" x2="425.5" y2="22" stroke="#8e8e8e"/><line x1="454.5" y1="12" x2="454.5" y2="22" stroke="#8e8e8e"/><text x="456.5" y="11" font-size="11" font-weight="bold" fill="#454545">150</text><line x1="483.5" y1="18" x2="483.5" y2="22" stroke="#8e8e8e"/><line x1="512.5" y1="18" x2="512.5" y2="22" stroke="#8e8e8e"/><line x1="541.5" y1="18" x2="541.5" y2="22" stroke="#8e8e8e"/><line x1="570.5" y1="18" x2="570.5" y2="22" stroke="#8e8e8e"/><line x1="599.5" y1="12" x2="599.5" y2="22" stroke="#8e8e8e"/><text x="601.5" y="11" font-size="11" font-weight="bold" fill="#454545">200</text><line x1="628.5" y1="18" x2="628.5" y2="22" stroke="#8e8e8e"/><line x1="657.5" y1="18" x2="657.5" y2="22" stroke="#8e8e8e"/><line x1="686.5" y1="18" x2="686.5" y2="22" stroke="#8e8e8e"/><line x1="715.5" y1="18" x2="715.5" y2="22" stroke="#8e8e8e"/><line x1="744.5" y1="12" x2="744.5" y2="22" stroke="#8e8e8e"/><text x="746.5" y="11" font-size="11" font-weight="bold" fill="#454545">250</text><line x1="773.5" y1="18" x2="773.5" y2="22" stroke="#8e8e8e"/><line x1="802.5" y1="18" x2="802.5" y2="22" stroke="#8e8e8e"/><line x1="831.5" y1="18" x2="831.5" y2="22" stroke="#8e8e8e"/><line x1="860.5" y1="18" x2="860.5" y2="22" stroke="#8e8e8e"/><line x1="889.5" y1="12" x2="889.5" y2="22" stroke="#8e8e8e"/><text x="891.5" y="11" font-size="11" font-weight="bold" fill="#454545">300</text><line x1="918.5" y1="18" x2="918.5" y2="22" stroke="#8e8e8e"/><line x1="947.5" y1="18" x2="947.5" y2="22" stroke="#8e8e8e"/><line x1="976.5" y1="18" x2="976.5" y2="22" stroke="#8e8e8e"/><line x1="1005.5" y1="18" x2="1005.5" y2="22" stroke="#8e8e8e"/><line x1="1034.5" y1="12" x2="1034.5" y2="22" stroke="#8e8e8e"/><text x="1036.5" y="11" font-size="11" font-weight="bold" fill="#454545">350</text><line x1="1063.5" y1="18" x2="1063.5" y2="22" stroke="#8e8e8e"/><line x1="1092.5" y1="18" x2="1092.5" y2="22" stroke="#8e8e8e"/><line x1="1121.5" y1="18" x2="1121.5" y2="22" stroke="#8e8e8e"/><line x1="1150.5" y1="18" x2="1150.5" y2="22" stroke="#8e8e8e"/><line x1="1179.5" y1="12" x2="1179.5" y2="22" stroke="#8e8e8e"/><text x="1181.5" y="11" font-size="11" font-weight="bold" fill="#454545">400</text><line x1="1208.5" y1="18" x2="1208.5" y2="22" stroke="#8e8e8e"/><line x1="1237.5" y1="18" x2="1237.5" y2="22" stroke="#8e8e8e"/><line x1="1266.5" y1="18" x2="1266.5" y2="22" stroke="#8e8e8e"/><line x1="1295.5" y1="18" x2="1295.5" y2="22" stroke="#8e8e8e"/><line x1="1324.5" y1="12" x2="1324.5" y2="22" stroke="#8e8e8e"/><text x="1326.5" y="11" font-size="11" font-weight="bold" fill="#454545">450</text><line x1="1353.5" y1="18" x2="1353.5" y2="22" stroke="#8e8e8e"/><line x1="1382.5" y1="18" x2="1382.5" y2="22" stroke="#8e8e8e"/><line x1="15" y1="51.5" x2="19" y2="51.5" stroke="#8e8e8e"/><line x1="15" y1="80.5" x2="19" y2="80.5" stroke="#8e8e8e"/><line x1="15" y1="109.5" x2="19" y2="109.5" stroke="#8e8e8e"/><line x1="15" y1="138.5" x2="19" y2="138.5" stroke="#8e8e8e"/><line x1="9" y1="167.5" x2="19" y2="167.5" stroke="#8e8e8e"/><text transform="translate(10 165.5) rotate(-90)" font-size="11" font-weight="bold" fill="#454545">50</text><line x1="15" y1="196.5" x2="19" y2="196.5" stroke="#8e8e8e"/><line x1="15" y1="225.5" x2="19" y2="225.5" stroke="#8e8e8e"/><line x1="15" y1="254.5" x2="19" y2="254.5" stroke="#8e8e8e"/><line x1="15" y1="283.5" x2="19" y2="283.5" stroke="#8e8e8e"/><line x1="9" y1="312.5" x2="19" y2="312.5" stroke="#8e8e8e"/><text transform="translate(10 310.5) rotate(-90)" font-size="11" font-weight="bold" fill="#454545">100</text><line x1="15" y1="341.5" x2="19" y2="341.5" stroke="#8e8e8e"/><line x1="15" y1="370.5" x2="19" y2="370.5" stroke="#8e8e8e"/><line x1="15" y1="399.5" x2="19" y2="399.5" stroke="#8e8e8e"/><line x1="15" y1="428.5" x2="19" y2="428.5" stroke="#8e8e8e"/><line x1="9" y1="457.5" x2="19" y2="457.5" stroke="#8e8e8e"/><text transform="translate(10 455.5) rotate(-90)" font-size="11" font-weight="bold" fill="#454545">150</text><line x1="15" y1="486.5" x2="19" y2="486.5" stroke="#8e8e8e"/><line x1="15" y1="515.5" x2="19" y2="515.5" stroke="#8e8e8e"/><line x1="15" y1="544.5" x2="19" y2="544.5" stroke="#8e8e8e"/><line x1="15" y1="573.5" x2="19" y2="573.5" stroke="#8e8e8e"/><line x1="9" y1="602.5" x2="19" y2="602.5" stroke="#8e8e8e"/><text transform="translate(10 600.5) rotate(-90)" font-size="11" font-weight="bold" fill="#454545">200</text><line x1="15" y1="631.5" x2="19" y2="631.5" stroke="#8e8e8e"/><line x1="15" y1="660.5" x2="19" y2="660.5" stroke="#8e8e8e"/><line x1="15" y1="689.5" x2="19" y2="689.5" stroke="#8e8e8e"/><line x1="15" y1="718.5" x2="19" y2="718.5" stroke="#8e8e8e"/>
<line x1="506.5" y1="0" x2="506.5" y2="22" stroke="#8e8e8e"/>
</svg></body></html>
